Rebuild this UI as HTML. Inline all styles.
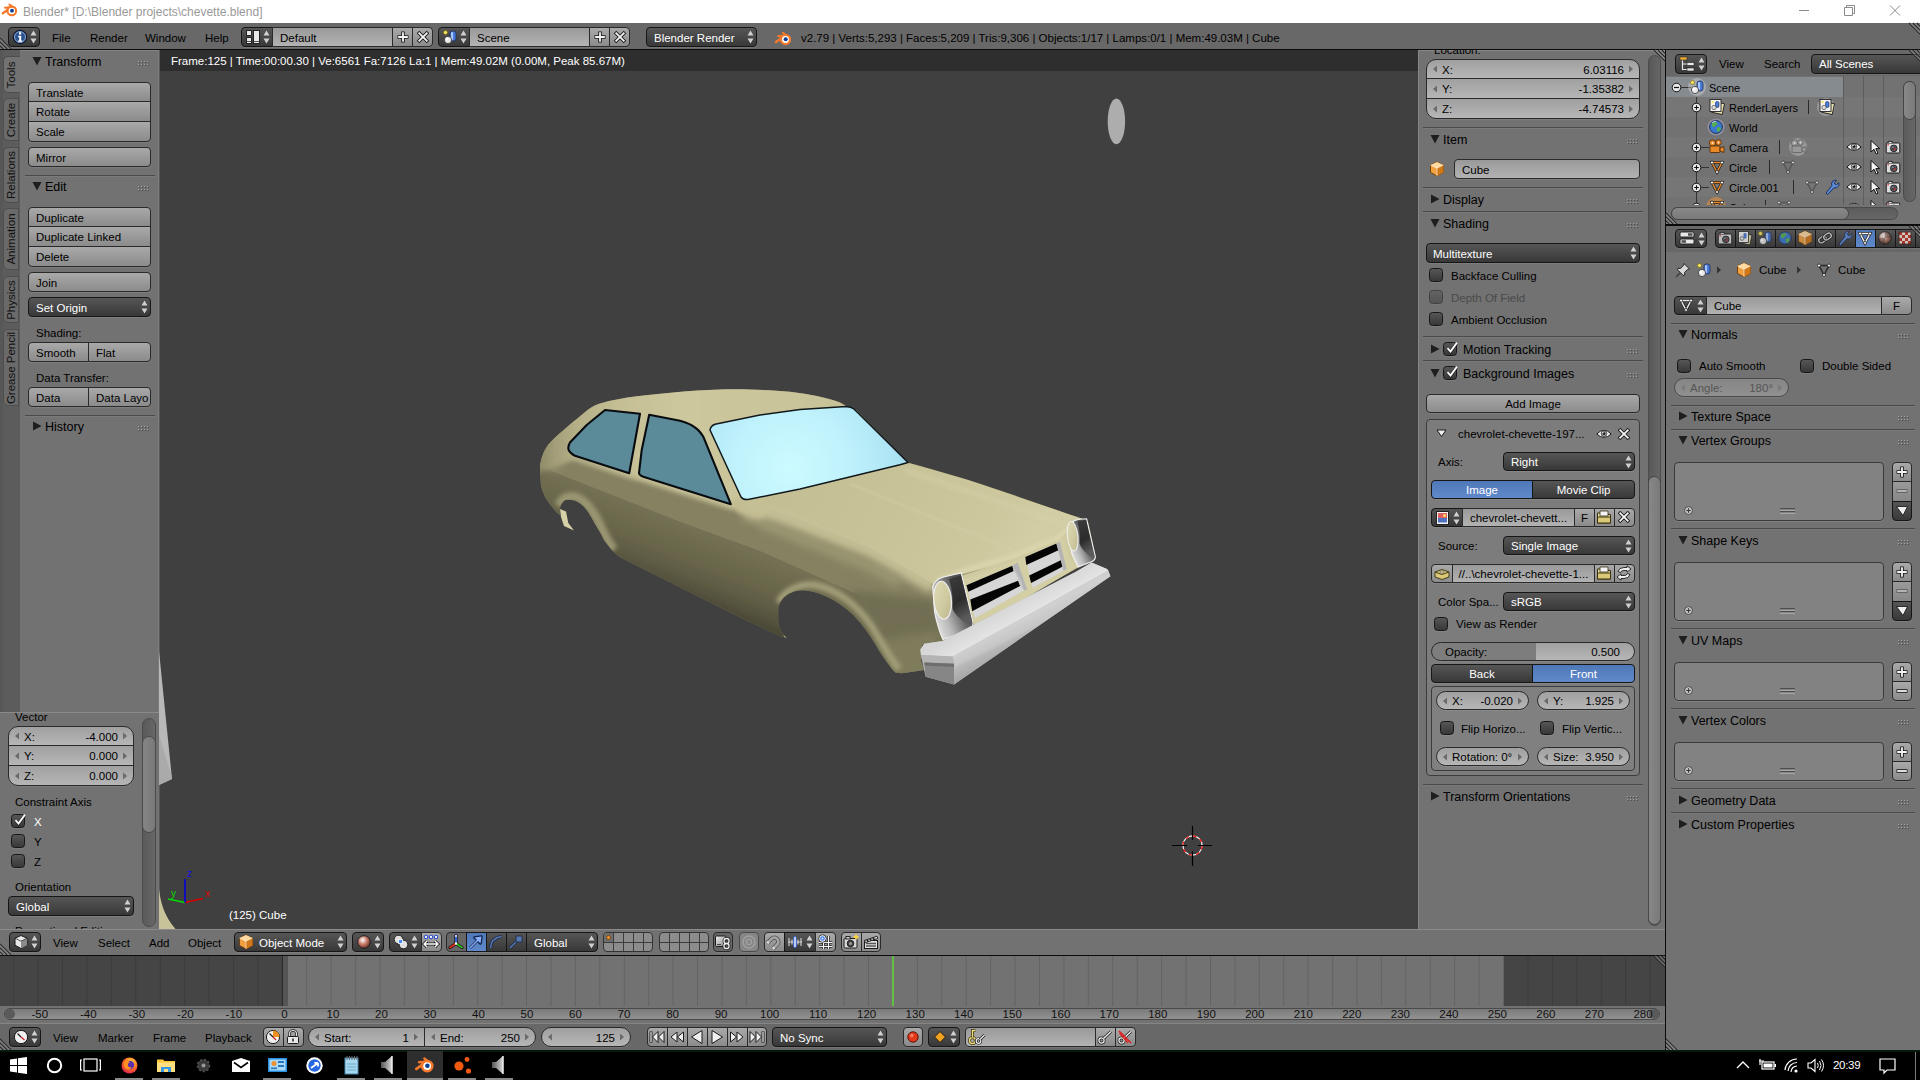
<!DOCTYPE html>
<html><head><meta charset="utf-8"><title>Blender</title><style>
html,body{margin:0;padding:0;background:#000;}
body{width:1920px;height:1080px;position:relative;overflow:hidden;font-family:"Liberation Sans",sans-serif;font-size:11.5px;color:#000;}
.a{position:absolute;box-sizing:border-box;white-space:nowrap;}
.t{font-size:11.5px;color:#000;}
.w{color:#fff;}
.ph{font-size:12.5px;color:#000;}
.tool{background:linear-gradient(#a9a9a9,#8b8b8b);border:1px solid #2a2a2a;border-radius:4px;box-shadow:0 1px 0 rgba(255,255,255,.08);}
.menu{background:linear-gradient(#565656,#383838);border:1px solid #161616;border-radius:4px;color:#fff;box-shadow:0 1px 0 rgba(255,255,255,.08);}
.num{background:linear-gradient(#a0a0a0,#b6b6b6);border:1px solid #2a2a2a;border-radius:10px;box-shadow:0 1px 0 rgba(255,255,255,.08);}
.tf{background:linear-gradient(#999,#b3b3b3);border:1px solid #2a2a2a;border-radius:4px;box-shadow:0 1px 0 rgba(255,255,255,.08);}
.sel{background:linear-gradient(#4f78b8,#6089cb);border:1px solid #161616;color:#fff;}
.chk{background:linear-gradient(#565656,#383838);border:1px solid #161616;border-radius:3.5px;box-shadow:0 1px 0 rgba(255,255,255,.08);}
.lbl{padding-left:7px;line-height:19px;font-size:11.5px;}
.ctr{text-align:center;line-height:19px;font-size:11.5px;}
.sep{background:#4a4a4a;height:1px;box-shadow:0 1px 0 rgba(255,255,255,.06);}
.r0{border-radius:0}
.tl{border-top-left-radius:4px}.tr{border-top-right-radius:4px}.bl{border-bottom-left-radius:4px}.br{border-bottom-right-radius:4px}
svg{position:absolute;overflow:visible}
</style></head><body>
<div class="a " style="left:0px;top:0px;width:1920px;height:23px;background:#fff"></div>
<svg style="left:0px;top:0px" width="20" height="20" viewBox="0 0 20 20"><g stroke="#f5792a" stroke-linecap="round" fill="none"><path d="M2.8 13.3L8.6 9.2" stroke-width="2.3"/><path d="M5 7.7L10.5 7.3" stroke-width="2"/><path d="M9.4 4.5L12.4 6.9" stroke-width="2"/></g><circle cx="11.8" cy="10.9" r="4.3" fill="#fff" stroke="#f5792a" stroke-width="2.1"/><circle cx="12" cy="10.7" r="1.9" fill="#0c3f90"/></svg>
<div class="a" style="left:23px;top:0;height:23px;line-height:24px;font-size:12px;color:#999">Blender* [D:\Blender projects\chevette.blend]</div>
<svg style="left:1790px;top:0" width="130" height="23"><path d="M9 10.5 H19 M54.5 7.5 H62.5 V15.5 H54.5Z M56.5 7.5 V5.5 H64.5 V13.5 H62.5 M100 5.5 L110 15.5 M110 5.5 L100 15.5" stroke="#8a8a8a" stroke-width="1" fill="none"/></svg>
<div class="a " style="left:0px;top:23px;width:1920px;height:27px;background:#686868;border-bottom:1px solid #0a0a0a"></div>
<svg style="left:0px;top:37px" width="12" height="12" viewBox="0 0 12 12"><path d="M0 1 L11 12 M0 5 L7 12 M0 9 L3 12" stroke="#2e2e2e" stroke-width="1.2" fill="none"/><path d="M0 2.4 L9.6 12 M0 6.4 L5.6 12 M0 10.4 L1.6 12" stroke="#9a9a9a" stroke-width="0.9" fill="none"/></svg>
<div class="a menu lbl " style="left:8px;top:27px;width:32px;height:20px;line-height:20px;"></div>
<svg style="left:30px;top:27px" width="8" height="20" viewBox="0 0 8 20"><path d="M0.5 8.5 L3.5 3.5 L6.5 8.5Z M0.5 11.5 L3.5 16.5 L6.5 11.5Z" fill="#d0d0d0"/></svg>
<svg style="left:12px;top:29px" width="16" height="16" viewBox="0 0 16 16"><circle cx="8" cy="8" r="6.6" fill="#2b528e" stroke="#0c162c" stroke-width="1.2"/><circle cx="8" cy="8" r="5.5" fill="none" stroke="#b0c8ee" stroke-width="1" stroke-opacity=".75"/><path d="M7 3.2h2.2v2.2H7z M6.2 6.8h3v4.6h1.2v1.4H6v-1.4h1.2V8.2H6.2z" fill="#fff"/></svg>
<div class="a t" style="left:52px;top:28px;height:20px;line-height:20px;">File</div>
<div class="a t" style="left:90px;top:28px;height:20px;line-height:20px;">Render</div>
<div class="a t" style="left:145px;top:28px;height:20px;line-height:20px;">Window</div>
<div class="a t" style="left:205px;top:28px;height:20px;line-height:20px;">Help</div>
<div class="a menu lbl r0 tl bl" style="left:241px;top:27px;width:32px;height:20px;line-height:20px;"></div>
<svg style="left:246px;top:30px" width="14" height="14" viewBox="0 0 14 14"><rect x="0.5" y="0.5" width="5" height="5" fill="#e8e8e8" stroke="#222"/><rect x="0.5" y="7.5" width="5" height="6" fill="#e8e8e8" stroke="#222"/><rect x="7.5" y="0.5" width="6" height="13" fill="#e8e8e8" stroke="#222"/><path d="M1 11.5h4 M8 11.5h5" stroke="#555"/></svg>
<svg style="left:263px;top:27px" width="8" height="20" viewBox="0 0 8 20"><path d="M0.5 8.5 L3.5 3.5 L6.5 8.5Z M0.5 11.5 L3.5 16.5 L6.5 11.5Z" fill="#d0d0d0"/></svg>
<div class="a tf lbl r0" style="left:272px;top:27px;width:121px;height:20px;line-height:20px;padding-left:7px">Default</div>
<div class="a tool lbl r0" style="left:392px;top:27px;width:21px;height:20px;line-height:20px;"></div>
<svg style="left:395px;top:29px" width="16" height="16" viewBox="0 0 16 16"><path d="M8 2.5V13.5M2.5 8H13.5" stroke="#1a1a1a" stroke-width="3.6"/><path d="M8 3.2V12.8M3.2 8H12.8" stroke="#f4f4f4" stroke-width="1.8"/></svg>
<div class="a tool lbl r0 tr br" style="left:412px;top:27px;width:21px;height:20px;line-height:20px;"></div>
<svg style="left:415px;top:29px" width="16" height="16" viewBox="0 0 16 16"><path d="M3 3L13 13M13 3L3 13" stroke="#1a1a1a" stroke-width="3.6"/><path d="M3.6 3.6L12.4 12.4M12.4 3.6L3.6 12.4" stroke="#f4f4f4" stroke-width="1.8"/></svg>
<div class="a menu lbl r0 tl bl" style="left:438px;top:27px;width:32px;height:20px;line-height:20px;"></div>
<svg style="left:442px;top:29px" width="16" height="16" viewBox="0 0 16 16"><rect x="8" y="2" width="6" height="10" rx="2.5" fill="#4a7ad8" stroke="#1b2c50" stroke-width=".8"/><rect x="9" y="3" width="2" height="8" rx="1" fill="#a8c8ff"/><circle cx="6" cy="11" r="3.6" fill="#e8e8e8" stroke="#333" stroke-width=".8"/><circle cx="5" cy="10" r="1.4" fill="#fff"/><circle cx="3.5" cy="3.5" r="2" fill="#f5e663" stroke="#7a6a10" stroke-width=".7"/></svg>
<svg style="left:460px;top:27px" width="8" height="20" viewBox="0 0 8 20"><path d="M0.5 8.5 L3.5 3.5 L6.5 8.5Z M0.5 11.5 L3.5 16.5 L6.5 11.5Z" fill="#d0d0d0"/></svg>
<div class="a tf lbl r0" style="left:469px;top:27px;width:121px;height:20px;line-height:20px;padding-left:7px">Scene</div>
<div class="a tool lbl r0" style="left:589px;top:27px;width:21px;height:20px;line-height:20px;"></div>
<svg style="left:592px;top:29px" width="16" height="16" viewBox="0 0 16 16"><path d="M8 2.5V13.5M2.5 8H13.5" stroke="#1a1a1a" stroke-width="3.6"/><path d="M8 3.2V12.8M3.2 8H12.8" stroke="#f4f4f4" stroke-width="1.8"/></svg>
<div class="a tool lbl r0 tr br" style="left:609px;top:27px;width:21px;height:20px;line-height:20px;"></div>
<svg style="left:612px;top:29px" width="16" height="16" viewBox="0 0 16 16"><path d="M3 3L13 13M13 3L3 13" stroke="#1a1a1a" stroke-width="3.6"/><path d="M3.6 3.6L12.4 12.4M12.4 3.6L3.6 12.4" stroke="#f4f4f4" stroke-width="1.8"/></svg>
<div class="a menu lbl " style="left:646px;top:27px;width:111px;height:20px;line-height:20px;">Blender Render</div>
<svg style="left:747px;top:27px" width="8" height="20" viewBox="0 0 8 20"><path d="M0.5 8.5 L3.5 3.5 L6.5 8.5Z M0.5 11.5 L3.5 16.5 L6.5 11.5Z" fill="#d0d0d0"/></svg>
<svg style="left:773.3px;top:27.9px" width="21.2" height="21.2" viewBox="0 0 20 20"><g stroke="#f5792a" stroke-linecap="round" fill="none"><path d="M2.8 13.3L8.6 9.2" stroke-width="2.3"/><path d="M5 7.7L10.5 7.3" stroke-width="2"/><path d="M9.4 4.5L12.4 6.9" stroke-width="2"/></g><circle cx="11.8" cy="10.9" r="4.3" fill="#fff" stroke="#f5792a" stroke-width="2.1"/><circle cx="12" cy="10.7" r="1.9" fill="#0c3f90"/></svg>
<div class="a t" style="left:801px;top:28px;height:20px;line-height:20px;">v2.79 | Verts:5,293 | Faces:5,209 | Tris:9,306 | Objects:1/17 | Lamps:0/1 | Mem:49.03M | Cube</div>
<svg style="left:1908px;top:23px" width="12" height="12" viewBox="0 0 12 12"><path d="M1 0 L12 11 M5 0 L12 7 M9 0 L12 3" stroke="#2e2e2e" stroke-width="1.2" fill="none"/><path d="M2.4 0 L12 9.6 M6.4 0 L12 5.6 M10.4 0 L12 1.6" stroke="#9a9a9a" stroke-width="0.9" fill="none"/></svg>
<div class="a " style="left:0px;top:50px;width:160px;height:879px;background:#727272;border-top:1px solid #848484"></div>
<div class="a " style="left:0px;top:50px;width:20px;height:663px;background:#5c5c5c"></div>
<div class="a " style="left:0px;top:50px;width:3px;height:663px;background:#575757"></div>
<div class="a " style="left:3px;top:56px;width:17px;height:37px;background:#727272;border:1px solid #4e4e4e;border-right:none;border-radius:5px 0 0 5px;"></div>
<div class="a" style="left:3px;top:56px;width:16px;height:37px;"><div class="a" style="left:8px;top:18.5px;transform:translate(-50%,-50%) rotate(-90deg);font-size:11.5px;line-height:14px;color:#111">Tools</div></div>
<div class="a " style="left:3px;top:98px;width:16px;height:43px;background:#6a6a6a;border:1px solid #4e4e4e;border-radius:5px 0 0 5px;"></div>
<div class="a" style="left:3px;top:98px;width:16px;height:43px;"><div class="a" style="left:8px;top:21.5px;transform:translate(-50%,-50%) rotate(-90deg);font-size:11.5px;line-height:14px;color:#111">Create</div></div>
<div class="a " style="left:3px;top:147px;width:16px;height:56px;background:#6a6a6a;border:1px solid #4e4e4e;border-radius:5px 0 0 5px;"></div>
<div class="a" style="left:3px;top:147px;width:16px;height:56px;"><div class="a" style="left:8px;top:28.0px;transform:translate(-50%,-50%) rotate(-90deg);font-size:11.5px;line-height:14px;color:#111">Relations</div></div>
<div class="a " style="left:3px;top:208px;width:16px;height:62px;background:#6a6a6a;border:1px solid #4e4e4e;border-radius:5px 0 0 5px;"></div>
<div class="a" style="left:3px;top:208px;width:16px;height:62px;"><div class="a" style="left:8px;top:31.0px;transform:translate(-50%,-50%) rotate(-90deg);font-size:11.5px;line-height:14px;color:#111">Animation</div></div>
<div class="a " style="left:3px;top:276px;width:16px;height:47px;background:#6a6a6a;border:1px solid #4e4e4e;border-radius:5px 0 0 5px;"></div>
<div class="a" style="left:3px;top:276px;width:16px;height:47px;"><div class="a" style="left:8px;top:23.5px;transform:translate(-50%,-50%) rotate(-90deg);font-size:11.5px;line-height:14px;color:#111">Physics</div></div>
<div class="a " style="left:3px;top:329px;width:16px;height:77px;background:#6a6a6a;border:1px solid #4e4e4e;border-radius:5px 0 0 5px;"></div>
<div class="a" style="left:3px;top:329px;width:16px;height:77px;"><div class="a" style="left:8px;top:38.5px;transform:translate(-50%,-50%) rotate(-90deg);font-size:11.5px;line-height:14px;color:#111">Grease Pencil</div></div>
<svg style="left:32px;top:56px" width="10" height="10"><path d="M0.5 1 L9.5 1 L5 9.5Z" fill="#1e1e1e"/></svg>
<div class="a ph" style="left:45px;top:52px;height:20px;line-height:20px;">Transform</div>
<svg style="left:138px;top:61px" width="12" height="6"><rect x="0" y="0" width="1" height="1" fill="#c8c8c8" fill-opacity=".55"/><rect x="1" y="1" width="1" height="1" fill="#000" fill-opacity=".35"/><rect x="0" y="3" width="1" height="1" fill="#c8c8c8" fill-opacity=".55"/><rect x="1" y="4" width="1" height="1" fill="#000" fill-opacity=".35"/><rect x="3" y="0" width="1" height="1" fill="#c8c8c8" fill-opacity=".55"/><rect x="4" y="1" width="1" height="1" fill="#000" fill-opacity=".35"/><rect x="3" y="3" width="1" height="1" fill="#c8c8c8" fill-opacity=".55"/><rect x="4" y="4" width="1" height="1" fill="#000" fill-opacity=".35"/><rect x="6" y="0" width="1" height="1" fill="#c8c8c8" fill-opacity=".55"/><rect x="7" y="1" width="1" height="1" fill="#000" fill-opacity=".35"/><rect x="6" y="3" width="1" height="1" fill="#c8c8c8" fill-opacity=".55"/><rect x="7" y="4" width="1" height="1" fill="#000" fill-opacity=".35"/><rect x="9" y="0" width="1" height="1" fill="#c8c8c8" fill-opacity=".55"/><rect x="10" y="1" width="1" height="1" fill="#000" fill-opacity=".35"/><rect x="9" y="3" width="1" height="1" fill="#c8c8c8" fill-opacity=".55"/><rect x="10" y="4" width="1" height="1" fill="#000" fill-opacity=".35"/></svg>
<div class="a tool lbl r0 tl tr" style="left:28px;top:82px;width:123px;height:20px;line-height:20px;">Translate</div>
<div class="a tool lbl r0" style="left:28px;top:101px;width:123px;height:21px;line-height:20px;">Rotate</div>
<div class="a tool lbl r0 bl br" style="left:28px;top:121px;width:123px;height:21px;line-height:20px;">Scale</div>
<div class="a tool lbl " style="left:28px;top:147px;width:123px;height:20px;line-height:20px;">Mirror</div>
<div class="a sep" style="left:25px;top:175px;width:130px;height:1px;"></div>
<svg style="left:32px;top:181px" width="10" height="10"><path d="M0.5 1 L9.5 1 L5 9.5Z" fill="#1e1e1e"/></svg>
<div class="a ph" style="left:45px;top:177px;height:20px;line-height:20px;">Edit</div>
<svg style="left:138px;top:186px" width="12" height="6"><rect x="0" y="0" width="1" height="1" fill="#c8c8c8" fill-opacity=".55"/><rect x="1" y="1" width="1" height="1" fill="#000" fill-opacity=".35"/><rect x="0" y="3" width="1" height="1" fill="#c8c8c8" fill-opacity=".55"/><rect x="1" y="4" width="1" height="1" fill="#000" fill-opacity=".35"/><rect x="3" y="0" width="1" height="1" fill="#c8c8c8" fill-opacity=".55"/><rect x="4" y="1" width="1" height="1" fill="#000" fill-opacity=".35"/><rect x="3" y="3" width="1" height="1" fill="#c8c8c8" fill-opacity=".55"/><rect x="4" y="4" width="1" height="1" fill="#000" fill-opacity=".35"/><rect x="6" y="0" width="1" height="1" fill="#c8c8c8" fill-opacity=".55"/><rect x="7" y="1" width="1" height="1" fill="#000" fill-opacity=".35"/><rect x="6" y="3" width="1" height="1" fill="#c8c8c8" fill-opacity=".55"/><rect x="7" y="4" width="1" height="1" fill="#000" fill-opacity=".35"/><rect x="9" y="0" width="1" height="1" fill="#c8c8c8" fill-opacity=".55"/><rect x="10" y="1" width="1" height="1" fill="#000" fill-opacity=".35"/><rect x="9" y="3" width="1" height="1" fill="#c8c8c8" fill-opacity=".55"/><rect x="10" y="4" width="1" height="1" fill="#000" fill-opacity=".35"/></svg>
<div class="a tool lbl r0 tl tr" style="left:28px;top:207px;width:123px;height:20px;line-height:20px;">Duplicate</div>
<div class="a tool lbl r0" style="left:28px;top:226px;width:123px;height:21px;line-height:20px;">Duplicate Linked</div>
<div class="a tool lbl r0 bl br" style="left:28px;top:246px;width:123px;height:21px;line-height:20px;">Delete</div>
<div class="a tool lbl " style="left:28px;top:272px;width:123px;height:20px;line-height:20px;">Join</div>
<div class="a menu lbl " style="left:28px;top:297px;width:123px;height:20px;line-height:20px;">Set Origin</div>
<svg style="left:141px;top:297px" width="8" height="20" viewBox="0 0 8 20"><path d="M0.5 8.5 L3.5 3.5 L6.5 8.5Z M0.5 11.5 L3.5 16.5 L6.5 11.5Z" fill="#d0d0d0"/></svg>
<div class="a t" style="left:36px;top:323px;height:20px;line-height:20px;">Shading:</div>
<div class="a tool lbl r0 tl bl" style="left:28px;top:342px;width:61px;height:20px;line-height:20px;">Smooth</div>
<div class="a tool lbl r0 tr br" style="left:88px;top:342px;width:63px;height:20px;line-height:20px;">Flat</div>
<div class="a t" style="left:36px;top:368px;height:20px;line-height:20px;">Data Transfer:</div>
<div class="a tool lbl r0 tl bl" style="left:28px;top:387px;width:61px;height:20px;line-height:20px;">Data</div>
<div class="a tool lbl r0 tr br" style="left:88px;top:387px;width:63px;height:20px;line-height:20px;overflow:hidden">Data Layo</div>
<div class="a sep" style="left:25px;top:415px;width:130px;height:1px;"></div>
<svg style="left:32px;top:420.5px" width="10" height="10"><path d="M1 0.5 L1 9.5 L9.5 5Z" fill="#1e1e1e"/></svg>
<div class="a ph" style="left:45px;top:416.5px;height:20px;line-height:20px;">History</div>
<svg style="left:138px;top:425.5px" width="12" height="6"><rect x="0" y="0" width="1" height="1" fill="#c8c8c8" fill-opacity=".55"/><rect x="1" y="1" width="1" height="1" fill="#000" fill-opacity=".35"/><rect x="0" y="3" width="1" height="1" fill="#c8c8c8" fill-opacity=".55"/><rect x="1" y="4" width="1" height="1" fill="#000" fill-opacity=".35"/><rect x="3" y="0" width="1" height="1" fill="#c8c8c8" fill-opacity=".55"/><rect x="4" y="1" width="1" height="1" fill="#000" fill-opacity=".35"/><rect x="3" y="3" width="1" height="1" fill="#c8c8c8" fill-opacity=".55"/><rect x="4" y="4" width="1" height="1" fill="#000" fill-opacity=".35"/><rect x="6" y="0" width="1" height="1" fill="#c8c8c8" fill-opacity=".55"/><rect x="7" y="1" width="1" height="1" fill="#000" fill-opacity=".35"/><rect x="6" y="3" width="1" height="1" fill="#c8c8c8" fill-opacity=".55"/><rect x="7" y="4" width="1" height="1" fill="#000" fill-opacity=".35"/><rect x="9" y="0" width="1" height="1" fill="#c8c8c8" fill-opacity=".55"/><rect x="10" y="1" width="1" height="1" fill="#000" fill-opacity=".35"/><rect x="9" y="3" width="1" height="1" fill="#c8c8c8" fill-opacity=".55"/><rect x="10" y="4" width="1" height="1" fill="#000" fill-opacity=".35"/></svg>
<div class="a " style="left:0px;top:712px;width:160px;height:1px;background:#8a8a8a"></div>
<div class="a t" style="left:15px;top:706.5px;height:20px;line-height:20px;">Vector</div>
<div class="a num" style="left:8px;top:726px;width:126px;height:20px;border-radius:10px 10px 0 0;"><span class="a" style="left:15px;top:0;line-height:20px;color:#000">X:</span><span class="a" style="right:15px;top:0;line-height:20px;color:#000">-4.000</span><svg style="left:5px;top:5.0px" width="6" height="8"><path d="M5 0.5 L1 4 L5 7.5Z" fill="#6a6a6a"/></svg><svg style="right:5px;top:5.0px" width="6" height="8"><path d="M1 0.5 L5 4 L1 7.5Z" fill="#6a6a6a"/></svg></div>
<div class="a num" style="left:8px;top:745px;width:126px;height:21px;border-radius:0;"><span class="a" style="left:15px;top:0;line-height:20px;color:#000">Y:</span><span class="a" style="right:15px;top:0;line-height:20px;color:#000">0.000</span><svg style="left:5px;top:5.5px" width="6" height="8"><path d="M5 0.5 L1 4 L5 7.5Z" fill="#6a6a6a"/></svg><svg style="right:5px;top:5.5px" width="6" height="8"><path d="M1 0.5 L5 4 L1 7.5Z" fill="#6a6a6a"/></svg></div>
<div class="a num" style="left:8px;top:765px;width:126px;height:21px;border-radius:0 0 10px 10px;"><span class="a" style="left:15px;top:0;line-height:20px;color:#000">Z:</span><span class="a" style="right:15px;top:0;line-height:20px;color:#000">0.000</span><svg style="left:5px;top:5.5px" width="6" height="8"><path d="M5 0.5 L1 4 L5 7.5Z" fill="#6a6a6a"/></svg><svg style="right:5px;top:5.5px" width="6" height="8"><path d="M1 0.5 L5 4 L1 7.5Z" fill="#6a6a6a"/></svg></div>
<div class="a " style="left:142px;top:718px;width:14px;height:209px;background:linear-gradient(90deg,#5a5a5a,#676767);border:1px solid #4a4a4a;border-radius:7px"></div>
<div class="a " style="left:142px;top:736px;width:14px;height:97px;background:linear-gradient(90deg,#858585,#7a7a7a);border:1px solid #4a4a4a;border-radius:7px"></div>
<div class="a t" style="left:15px;top:792px;height:20px;line-height:20px;">Constraint Axis</div>
<div class="a chk" style="left:11px;top:814px;width:14px;height:14px;"><svg style="left:-1px;top:-4px" width="18" height="18" viewBox="0 0 18 18"><path d="M4.5 9.5 L7.5 13 L14 4" fill="none" stroke="#000" stroke-opacity=".4" stroke-width="3"/><path d="M4.5 9.2 L7.5 12.6 L14 3.6" fill="none" stroke="#fff" stroke-width="1.8"/></svg></div>
<div class="a t w" style="left:34px;top:811.5px;height:20px;line-height:20px;">X</div>
<div class="a chk" style="left:11px;top:834px;width:14px;height:14px;"></div>
<div class="a t" style="left:34px;top:831.5px;height:20px;line-height:20px;">Y</div>
<div class="a chk" style="left:11px;top:854px;width:14px;height:14px;"></div>
<div class="a t" style="left:34px;top:851.5px;height:20px;line-height:20px;">Z</div>
<div class="a t" style="left:15px;top:877px;height:20px;line-height:20px;">Orientation</div>
<div class="a menu lbl " style="left:8px;top:896px;width:126px;height:20px;line-height:20px;padding-left:7px">Global</div>
<svg style="left:124px;top:896px" width="8" height="20" viewBox="0 0 8 20"><path d="M0.5 8.5 L3.5 3.5 L6.5 8.5Z M0.5 11.5 L3.5 16.5 L6.5 11.5Z" fill="#d0d0d0"/></svg>
<div class="a" style="left:15px;top:921px;height:8px;overflow:hidden;line-height:20px;font-size:11.5px">Proportional Editing</div>
<div class="a " style="left:159px;top:50px;width:1259px;height:879px;background:#404040"></div>
<div class="a " style="left:158px;top:50px;width:1px;height:662px;background:#7d7d7d"></div>
<div class="a " style="left:159px;top:50px;width:1px;height:879px;background:#585858"></div>
<svg style="left:160px;top:50px" width="1258" height="879" viewBox="160 50 1258 879"><defs>
<filter id="b2" x="-20%" y="-20%" width="140%" height="140%"><feGaussianBlur stdDeviation="2"/></filter>
<filter id="b4" x="-30%" y="-30%" width="160%" height="160%"><feGaussianBlur stdDeviation="4"/></filter>
<filter id="b8" x="-40%" y="-40%" width="180%" height="180%"><feGaussianBlur stdDeviation="8"/></filter>
<filter id="b05" x="-10%" y="-10%" width="120%" height="120%"><feGaussianBlur stdDeviation="0.6"/></filter>
<filter id="b1" x="-20%" y="-20%" width="140%" height="140%"><feGaussianBlur stdDeviation="1"/></filter>
<linearGradient id="side" gradientUnits="userSpaceOnUse" x1="680" y1="521.7" x2="652.5" y2="591.5">
 <stop offset="0" stop-color="#747054"/><stop offset=".2" stop-color="#6e6b4f"/><stop offset=".45" stop-color="#67644a"/><stop offset=".65" stop-color="#5d5b43"/><stop offset=".85" stop-color="#4f4d39"/><stop offset="1" stop-color="#444230"/>
</linearGradient>
<linearGradient id="roof" gradientUnits="userSpaceOnUse" x1="540" y1="400" x2="850" y2="400">
 <stop offset="0" stop-color="#8f8b68"/><stop offset=".05" stop-color="#a39f79"/><stop offset=".12" stop-color="#b5b088"/><stop offset=".25" stop-color="#c4be94"/><stop offset=".45" stop-color="#cdc79d"/><stop offset="1" stop-color="#c8c298"/>
</linearGradient>
<linearGradient id="hood" gradientUnits="userSpaceOnUse" x1="800" y1="470" x2="1000" y2="590">
 <stop offset="0" stop-color="#c4be94"/><stop offset=".5" stop-color="#c9c399"/><stop offset=".85" stop-color="#cdc89e"/><stop offset="1" stop-color="#d2cda4"/>
</linearGradient>
<radialGradient id="ws" gradientUnits="userSpaceOnUse" cx="790" cy="468" r="125">
 <stop offset="0" stop-color="#ccfaff"/><stop offset=".45" stop-color="#c0f2fc"/><stop offset=".8" stop-color="#afe6f5"/><stop offset="1" stop-color="#a2dcef"/>
</radialGradient>
<linearGradient id="bumpf" gradientUnits="userSpaceOnUse" x1="1000" y1="631" x2="1012" y2="655">
 <stop offset="0" stop-color="#d0d0d0"/><stop offset=".4" stop-color="#c6c6c6"/><stop offset=".52" stop-color="#b8b8b8"/><stop offset="1" stop-color="#a6a6a6"/>
</linearGradient>
<linearGradient id="chr1" gradientUnits="userSpaceOnUse" x1="938" y1="636" x2="972" y2="622">
 <stop offset="0" stop-color="#e6e6e6"/><stop offset=".4" stop-color="#b8b8b8"/><stop offset=".8" stop-color="#6a6a6a"/><stop offset="1" stop-color="#505050"/>
</linearGradient>
<linearGradient id="chr2" gradientUnits="userSpaceOnUse" x1="1075" y1="565" x2="1095" y2="556">
 <stop offset="0" stop-color="#e6e6e6"/><stop offset=".4" stop-color="#b8b8b8"/><stop offset=".8" stop-color="#6a6a6a"/><stop offset="1" stop-color="#505050"/>
</linearGradient>
<linearGradient id="hdark" gradientUnits="objectBoundingBox" x1="0" y1="0" x2=".3" y2="1"><stop offset="0" stop-color="#3c3c3c"/><stop offset=".6" stop-color="#2c2c2c"/><stop offset="1" stop-color="#5a5a5a"/></linearGradient>
<linearGradient id="bez" gradientUnits="objectBoundingBox" x1="0" y1="0" x2="1" y2="1"><stop offset="0" stop-color="#e0dbb4"/><stop offset=".6" stop-color="#cec99f"/><stop offset="1" stop-color="#b9b48c"/></linearGradient>
<linearGradient id="bumpt" gradientUnits="userSpaceOnUse" x1="1000" y1="610" x2="1010" y2="628"><stop offset="0" stop-color="#d6d6d6"/><stop offset="1" stop-color="#e6e6e6"/></linearGradient>
<clipPath id="bodyclip"><path id="bodyp" d="M540,468 C540.5,460 543,452 548,445 C556,436 568,426 578,418 C586,411 592,406 600,403.5 C612,400 624,398 637,396.3 C660,393.5 690,390.5 720,389.5 C745,388.8 770,390 790,391.8 C810,394 828,398 840,402.5 L847,406.5 L856,410 L908.5,463 C925,467 945,473 967,479.5 C1000,490 1035,502 1067,513.5 L1083,519 L1088.5,523 L1096,558 L1078,568 L944,641 L922,645 L921,661 L924,670 L902,673.2 L895.4,672.5 C891,668 882,656 877,647 C869,633 859,620 850.6,612.4 C840,603 826,595 813.9,592 C806,590 800,590 795.6,591 C789,593 785,596 783.3,598.1 C779,603 778,607 778.2,610.4 L778.2,622.6 C779,628 781,632 783.3,634.8 L786.4,637.9 L779.3,635.8 L742.6,618.5 L701.9,598.2 L661,577.8 L620.4,557.4 C614,553 609,547 604,540 C601,533 598,529 595,524 C592,518 589,513 586.7,510 C583,505 579,502 575,500.5 C571,499.5 568,499.5 565,500 C562,502 560.5,505 560,508 L560,515 C556,512 554,510 553.3,508.3 C549,503 547,500 545,496.7 C542,490 541,487 540.8,483.3 Z"/></clipPath>
</defs><ellipse cx="1116.4" cy="121.4" rx="8.7" ry="22.8" fill="#adadad"/><path d="M159,651 L172,779 L159,785Z" fill="#b8b8b8"/><path d="M159,735 L171.6,776 L172,779 L159,785Z" fill="#aaaaaa"/><path d="M159,889 C160.5,902 164,916 175.5,929 L159,929Z" fill="#c9c39a"/><g clip-path="url(#bodyclip)"><rect x="530" y="380" width="600" height="320" fill="#858161"/><path d="M530,462 L540.4,466.8 L680,521.7 L760,551 L861,596 L880,640 L900,690 L600,690 L530,520Z" fill="url(#side)" filter="url(#b05)"/><path d="M850,590 L900,596 L934,600 L946,640 L930,680 L890,680 L870,630Z" fill="#716e52" filter="url(#b4)"/><path d="M880,640 L940,630 L930,680 L895,680Z" fill="#7f7c5c" filter="url(#b4)"/><path d="M548,462 L570,455 L629,474.5 L643,478 L731,506 L745,505" fill="none" stroke="#aaa680" stroke-width="9" filter="url(#b2)"/><path d="M538,452 L560,440 L572,455 L556,470 L540,467Z" fill="#98946f" filter="url(#b4)"/><path d="M745,508 L780,514 L870,547 L936,584" fill="none" stroke="#bdb88f" stroke-width="22" filter="url(#b4)"/><path d="M760,522 L870,566 L900,582" fill="none" stroke="#9a9672" stroke-width="12" filter="url(#b4)"/><path d="M779,603 C783,592 798,583 815,585 C835,589 856,603 872,627 C882,643 890,658 899,669" fill="none" stroke="#a29e78" stroke-width="7" filter="url(#b2)"/><path d="M559,506 C562,498 568,495 576,497 C584,500 590,507 597,519 C601,528 606,540 614,550" fill="none" stroke="#9a9672" stroke-width="9" filter="url(#b2)"/><path d="M535,470 L541,440 L600,395 L720,380 L850,395 L915,462 L908,466 L748,503 L731,507 L643,480 L629,476 L575,458 L541,471Z" fill="url(#roof)" filter="url(#b2)"/><path d="M728,500 L750,497 L772,510 L760,518 L738,513Z" fill="#c2bc92" filter="url(#b2)"/><path d="M743,499.5 L908,462.5 L967,479.5 L1067,513.5 L1090,520 L1075,530 L1060,541 L1012,561 L963,574 L935,585 L870,548 L800,520Z" fill="url(#hood)"/><path d="M745,503 L800,522 L870,550 L934,586" fill="none" stroke="#c8c298" stroke-width="6" filter="url(#b4)"/><path d="M850,484 L1018,552" fill="none" stroke="#d6d1a8" stroke-width="2.5" filter="url(#b1)" opacity=".4"/><path d="M905,470 L1075,528" fill="none" stroke="#d6d1a8" stroke-width="6" filter="url(#b2)" opacity=".45"/><path d="M936,582 L963,571 L1012,557 L1058,538 L1072,527" fill="none" stroke="#dcd8b0" stroke-width="4" filter="url(#b2)"/><path d="M961,576 L1013,559 L1060,540 L1068,530 L1078,567 L975,628Z" fill="#cfca9f"/></g><path d="M605,410 L640,413.7 L629.2,473.3 L575,455.8 C570,453 568,451 568.3,448 C568.5,445 569,444 570,442.5 L586.7,425Z" fill="#5b8a99" stroke="#080c10" stroke-width="2.1" stroke-linejoin="round"/><path d="M649.2,414.7 L680,420.8 C688,423 692,425 695,427.5 C699,430 701,433 703.3,436.7 L730.8,504.2 L643.3,476.7 C640,475.5 639,474.5 639,473 L641.7,450Z" fill="#5b8a99" stroke="#080c10" stroke-width="2.1" stroke-linejoin="round"/><path d="M710,430 C710.5,427 712,425.5 715,424.3 L760,415 L800,409.6 L846,406.6 C850,406.8 852,407.5 854,409 L908,462.5 L900,464.8 L800,489 L748,499.5 C744,499.8 742.5,499 741,497Z" fill="url(#ws)" stroke="#10181c" stroke-width="1.5" stroke-linejoin="round"/><path d="M560,509 L566,511.5 L568.3,523 L574,530.5 L564,526 L561,517Z" fill="#d6d1a6"/><path d="M783.5,635 L787,638.5 L784,636.5Z" fill="#e0dcb6"/><path d="M963,580 L1014,561 L1022,558 L1064,538 L1070,560 L1078,567 L976,628Z" fill="#d3cea4"/><path d="M966.4,585.3 L1012.4,565.8 L1024.1,590.5 L974.8,618.3Z" fill="#d6d6d6"/><path d="M966.4,585.3 L1012.4,565.8 L1013.7,571 L968.3,591.8Z" fill="#050505"/><path d="M970.3,599.5 L1018.2,580.7 L1020.2,585.9 L972.2,611.2Z" fill="#050505"/><path d="M1012.4,565.8 L1017.6,562.6 L1027.3,589.8 L1024.1,590.5Z" fill="#b4b4b4"/><path d="M1012.4,565.8 L1013.7,571 L1018.2,576.9 L1018.2,580.7 L1020.2,585.9 L1024.1,590.5 L1021,580Z" fill="#c4c4c4"/><path d="M1025.3,557.1 L1056.4,543.5 L1063.5,571 L1032.5,588Z" fill="#d6d6d6"/><path d="M1025.3,557.1 L1056.4,543.5 L1058.4,550.3 L1026.3,564.9Z" fill="#050505"/><path d="M1029.2,575.6 L1061.3,560 L1062.3,566.8 L1031.1,583Z" fill="#050505"/><path d="M1056.4,543.5 L1060,541.5 L1066.5,569 L1063.5,571Z" fill="#b4b4b4"/><path d="M932.7,587 C934,582 938,578.5 943.7,577 L961.2,573 L973,622 C973.4,626 972,628 969,630 L943,639.5 C940,634 936,620 934.6,612Z" fill="url(#chr1)" stroke="#f2f2f2" stroke-width="1.1"/><path d="M949,579 L961,575.5 L972,622 C970,625 967,624 964,622 C958,617 953,612 952.5,608 C953,598 952,588 949,579Z" fill="url(#hdark)"/><ellipse cx="942.6" cy="600.2" rx="8.8" ry="19" fill="url(#bez)" stroke="#ededed" stroke-width="1.2" transform="rotate(-5 942.6 600.2)"/><path d="M1067.3,528.5 C1069,523.5 1074,520 1080,519.2 L1086.6,518.8 L1095.3,556.5 C1095.5,559 1094,560.5 1092,561.5 L1078,567 L1072,554Z" fill="url(#chr2)" stroke="#f2f2f2" stroke-width="1.1"/><path d="M1077.5,521.5 L1086,520 L1094,556 C1092,557.5 1089,556 1087,554 C1083,550 1080,546 1079.5,543 C1080,535 1079.5,528 1077.5,521.5Z" fill="url(#hdark)"/><ellipse cx="1072.6" cy="536.2" rx="5.3" ry="14.8" fill="url(#bez)" stroke="#ededed" stroke-width="1.1" transform="rotate(-6 1072.6 536.2)"/><path d="M920.4,649.5 L924.3,643.7 L942.4,641 L1075.9,571.7 L1091.6,562.6 L1107,569 L1110.4,576.2 L954,684.5 L925.6,676.7 L921,656Z" fill="#b6b6b6"/><path d="M920.4,649.5 L924.3,643.7 L942.4,641 L1075.9,571.7 L1091.6,562.6 L1107,569 L1108.4,570.6 L952.8,656.6 L921,655Z" fill="url(#bumpt)"/><path d="M952.8,656.6 L1108.4,570.6 L1110.4,576.2 L954,684.5Z" fill="url(#bumpf)"/><path d="M921,655 L952.8,656.6 L954,663.7 L924.3,662.5Z" fill="#b4b4b4"/><path d="M924.3,662.5 L954,663.7 L954,684.5 L925.6,676.7Z" fill="#868686"/><path d="M924.3,662.5 L954,663.7 L954,667 L924.8,665.5Z" fill="#6e6e6e"/><circle cx="1192.5" cy="845.5" r="9.6" fill="none" stroke="#fff" stroke-width="1.1"/><circle cx="1192.5" cy="845.5" r="9.6" fill="none" stroke="#f00" stroke-width="1.1" stroke-dasharray="3.77 3.77"/><path d="M1172,845.5H1187M1198,845.5H1212M1192.5,826V840M1192.5,851V866" stroke="#000" stroke-width="1.2"/><path d="M185,902.5L203,898.5" stroke="#dc0000" stroke-width="1.6"/><path d="M185,902.5L168,899" stroke="#00dc00" stroke-width="1.6"/><path d="M185,902.5V879" stroke="#0000dc" stroke-width="1.6"/><text x="205" y="897" font-family="Liberation Sans" font-size="10" fill="#dc0000">x</text><text x="171" y="897" font-family="Liberation Sans" font-size="10" fill="#00dc00">y</text><text x="187" y="877" font-family="Liberation Sans" font-size="10" fill="#1010e8">z</text></svg>
<div class="a " style="left:160px;top:50px;width:1258px;height:21px;background:rgba(0,0,0,.27)"></div>
<div class="a t w" style="left:171px;top:51px;height:20px;line-height:20px;">Frame:125 | Time:00:00.30 | Ve:6561 Fa:7126 La:1 | Mem:49.02M (0.00M, Peak 85.67M)</div>
<div class="a t w" style="left:229px;top:905px;height:20px;line-height:20px;">(125) Cube</div>
<div class="a " style="left:1418px;top:50px;width:247px;height:879px;background:#727272;border-left:1px solid #868686;border-top:1px solid #888"></div>
<div class="a" style="left:1434px;top:50px;height:6px;overflow:hidden;"><div style="margin-top:-10px;line-height:20px;font-size:11.5px">Location:</div></div>
<div class="a num" style="left:1426px;top:59px;width:214px;height:20px;border-radius:10px 10px 0 0;"><span class="a" style="left:15px;top:0;line-height:20px;color:#000">X:</span><span class="a" style="right:15px;top:0;line-height:20px;color:#000">6.03116</span><svg style="left:5px;top:5.0px" width="6" height="8"><path d="M5 0.5 L1 4 L5 7.5Z" fill="#6a6a6a"/></svg><svg style="right:5px;top:5.0px" width="6" height="8"><path d="M1 0.5 L5 4 L1 7.5Z" fill="#6a6a6a"/></svg></div>
<div class="a num" style="left:1426px;top:78px;width:214px;height:21px;border-radius:0;"><span class="a" style="left:15px;top:0;line-height:20px;color:#000">Y:</span><span class="a" style="right:15px;top:0;line-height:20px;color:#000">-1.35382</span><svg style="left:5px;top:5.5px" width="6" height="8"><path d="M5 0.5 L1 4 L5 7.5Z" fill="#6a6a6a"/></svg><svg style="right:5px;top:5.5px" width="6" height="8"><path d="M1 0.5 L5 4 L1 7.5Z" fill="#6a6a6a"/></svg></div>
<div class="a num" style="left:1426px;top:98px;width:214px;height:21px;border-radius:0 0 10px 10px;"><span class="a" style="left:15px;top:0;line-height:20px;color:#000">Z:</span><span class="a" style="right:15px;top:0;line-height:20px;color:#000">-4.74573</span><svg style="left:5px;top:5.5px" width="6" height="8"><path d="M5 0.5 L1 4 L5 7.5Z" fill="#6a6a6a"/></svg><svg style="right:5px;top:5.5px" width="6" height="8"><path d="M1 0.5 L5 4 L1 7.5Z" fill="#6a6a6a"/></svg></div>
<div class="a " style="left:1648px;top:55px;width:13px;height:871px;background:linear-gradient(90deg,#585858,#666);border:1px solid #4c4c4c;border-radius:7px"></div>
<div class="a " style="left:1648px;top:476px;width:13px;height:449px;background:linear-gradient(90deg,#878787,#7a7a7a);border:1px solid #484848;border-radius:7px"></div>
<div class="a sep" style="left:1423px;top:127px;width:220px;height:1px;"></div>
<svg style="left:1430px;top:133.5px" width="10" height="10"><path d="M0.5 1 L9.5 1 L5 9.5Z" fill="#1e1e1e"/></svg>
<div class="a ph" style="left:1443px;top:129.5px;height:20px;line-height:20px;">Item</div>
<svg style="left:1627px;top:138.5px" width="12" height="6"><rect x="0" y="0" width="1" height="1" fill="#c8c8c8" fill-opacity=".55"/><rect x="1" y="1" width="1" height="1" fill="#000" fill-opacity=".35"/><rect x="0" y="3" width="1" height="1" fill="#c8c8c8" fill-opacity=".55"/><rect x="1" y="4" width="1" height="1" fill="#000" fill-opacity=".35"/><rect x="3" y="0" width="1" height="1" fill="#c8c8c8" fill-opacity=".55"/><rect x="4" y="1" width="1" height="1" fill="#000" fill-opacity=".35"/><rect x="3" y="3" width="1" height="1" fill="#c8c8c8" fill-opacity=".55"/><rect x="4" y="4" width="1" height="1" fill="#000" fill-opacity=".35"/><rect x="6" y="0" width="1" height="1" fill="#c8c8c8" fill-opacity=".55"/><rect x="7" y="1" width="1" height="1" fill="#000" fill-opacity=".35"/><rect x="6" y="3" width="1" height="1" fill="#c8c8c8" fill-opacity=".55"/><rect x="7" y="4" width="1" height="1" fill="#000" fill-opacity=".35"/><rect x="9" y="0" width="1" height="1" fill="#c8c8c8" fill-opacity=".55"/><rect x="10" y="1" width="1" height="1" fill="#000" fill-opacity=".35"/><rect x="9" y="3" width="1" height="1" fill="#c8c8c8" fill-opacity=".55"/><rect x="10" y="4" width="1" height="1" fill="#000" fill-opacity=".35"/></svg>
<svg style="left:1429px;top:161px" width="16" height="16" viewBox="0 0 16 16"><path d="M8 1L14.5 4V11.5L8 15L1.5 11.5V4Z" fill="#f0a040" stroke="#6a3a08" stroke-width=".9"/><path d="M8 1L14.5 4L8 7.2L1.5 4Z" fill="#ffd9a0"/><path d="M8 7.2V15L14.5 11.5V4Z" fill="#d07818"/><path d="M1.5 4L8 7.2L14.5 4M8 7.2V15" stroke="#fff" stroke-opacity=".7" stroke-width=".8" fill="none"/></svg>
<div class="a tf lbl " style="left:1454px;top:159px;width:186px;height:20px;line-height:20px;padding-left:7px">Cube</div>
<div class="a sep" style="left:1423px;top:187px;width:220px;height:1px;"></div>
<svg style="left:1430px;top:193.5px" width="10" height="10"><path d="M1 0.5 L1 9.5 L9.5 5Z" fill="#1e1e1e"/></svg>
<div class="a ph" style="left:1443px;top:189.5px;height:20px;line-height:20px;">Display</div>
<svg style="left:1627px;top:198.5px" width="12" height="6"><rect x="0" y="0" width="1" height="1" fill="#c8c8c8" fill-opacity=".55"/><rect x="1" y="1" width="1" height="1" fill="#000" fill-opacity=".35"/><rect x="0" y="3" width="1" height="1" fill="#c8c8c8" fill-opacity=".55"/><rect x="1" y="4" width="1" height="1" fill="#000" fill-opacity=".35"/><rect x="3" y="0" width="1" height="1" fill="#c8c8c8" fill-opacity=".55"/><rect x="4" y="1" width="1" height="1" fill="#000" fill-opacity=".35"/><rect x="3" y="3" width="1" height="1" fill="#c8c8c8" fill-opacity=".55"/><rect x="4" y="4" width="1" height="1" fill="#000" fill-opacity=".35"/><rect x="6" y="0" width="1" height="1" fill="#c8c8c8" fill-opacity=".55"/><rect x="7" y="1" width="1" height="1" fill="#000" fill-opacity=".35"/><rect x="6" y="3" width="1" height="1" fill="#c8c8c8" fill-opacity=".55"/><rect x="7" y="4" width="1" height="1" fill="#000" fill-opacity=".35"/><rect x="9" y="0" width="1" height="1" fill="#c8c8c8" fill-opacity=".55"/><rect x="10" y="1" width="1" height="1" fill="#000" fill-opacity=".35"/><rect x="9" y="3" width="1" height="1" fill="#c8c8c8" fill-opacity=".55"/><rect x="10" y="4" width="1" height="1" fill="#000" fill-opacity=".35"/></svg>
<div class="a sep" style="left:1423px;top:211px;width:220px;height:1px;"></div>
<svg style="left:1430px;top:217.5px" width="10" height="10"><path d="M0.5 1 L9.5 1 L5 9.5Z" fill="#1e1e1e"/></svg>
<div class="a ph" style="left:1443px;top:213.5px;height:20px;line-height:20px;">Shading</div>
<svg style="left:1627px;top:222.5px" width="12" height="6"><rect x="0" y="0" width="1" height="1" fill="#c8c8c8" fill-opacity=".55"/><rect x="1" y="1" width="1" height="1" fill="#000" fill-opacity=".35"/><rect x="0" y="3" width="1" height="1" fill="#c8c8c8" fill-opacity=".55"/><rect x="1" y="4" width="1" height="1" fill="#000" fill-opacity=".35"/><rect x="3" y="0" width="1" height="1" fill="#c8c8c8" fill-opacity=".55"/><rect x="4" y="1" width="1" height="1" fill="#000" fill-opacity=".35"/><rect x="3" y="3" width="1" height="1" fill="#c8c8c8" fill-opacity=".55"/><rect x="4" y="4" width="1" height="1" fill="#000" fill-opacity=".35"/><rect x="6" y="0" width="1" height="1" fill="#c8c8c8" fill-opacity=".55"/><rect x="7" y="1" width="1" height="1" fill="#000" fill-opacity=".35"/><rect x="6" y="3" width="1" height="1" fill="#c8c8c8" fill-opacity=".55"/><rect x="7" y="4" width="1" height="1" fill="#000" fill-opacity=".35"/><rect x="9" y="0" width="1" height="1" fill="#c8c8c8" fill-opacity=".55"/><rect x="10" y="1" width="1" height="1" fill="#000" fill-opacity=".35"/><rect x="9" y="3" width="1" height="1" fill="#c8c8c8" fill-opacity=".55"/><rect x="10" y="4" width="1" height="1" fill="#000" fill-opacity=".35"/></svg>
<div class="a menu lbl " style="left:1426px;top:243px;width:214px;height:20px;line-height:20px;padding-left:6px">Multitexture</div>
<svg style="left:1630px;top:243px" width="8" height="20" viewBox="0 0 8 20"><path d="M0.5 8.5 L3.5 3.5 L6.5 8.5Z M0.5 11.5 L3.5 16.5 L6.5 11.5Z" fill="#d0d0d0"/></svg>
<div class="a chk" style="left:1429px;top:268px;width:14px;height:14px;"></div>
<div class="a t" style="left:1451px;top:266.0px;height:20px;line-height:20px;">Backface Culling</div>
<div class="a chk" style="left:1429px;top:290px;width:14px;height:14px;opacity:.5;"></div>
<div class="a t" style="left:1451px;top:288.0px;height:20px;line-height:20px;color:#4a4a4a">Depth Of Field</div>
<div class="a chk" style="left:1429px;top:312px;width:14px;height:14px;"></div>
<div class="a t" style="left:1451px;top:310.0px;height:20px;line-height:20px;">Ambient Occlusion</div>
<div class="a sep" style="left:1423px;top:336px;width:220px;height:1px;"></div>
<svg style="left:1430px;top:343.5px" width="10" height="10"><path d="M1 0.5 L1 9.5 L9.5 5Z" fill="#1e1e1e"/></svg>
<div class="a chk" style="left:1443px;top:341.5px;width:14px;height:14px;"><svg style="left:-1px;top:-4px" width="18" height="18" viewBox="0 0 18 18"><path d="M4.5 9.5 L7.5 13 L14 4" fill="none" stroke="#000" stroke-opacity=".4" stroke-width="3"/><path d="M4.5 9.2 L7.5 12.6 L14 3.6" fill="none" stroke="#fff" stroke-width="1.8"/></svg></div>
<div class="a ph" style="left:1463px;top:339.5px;height:20px;line-height:20px;">Motion Tracking</div>
<svg style="left:1627px;top:348.5px" width="12" height="6"><rect x="0" y="0" width="1" height="1" fill="#c8c8c8" fill-opacity=".55"/><rect x="1" y="1" width="1" height="1" fill="#000" fill-opacity=".35"/><rect x="0" y="3" width="1" height="1" fill="#c8c8c8" fill-opacity=".55"/><rect x="1" y="4" width="1" height="1" fill="#000" fill-opacity=".35"/><rect x="3" y="0" width="1" height="1" fill="#c8c8c8" fill-opacity=".55"/><rect x="4" y="1" width="1" height="1" fill="#000" fill-opacity=".35"/><rect x="3" y="3" width="1" height="1" fill="#c8c8c8" fill-opacity=".55"/><rect x="4" y="4" width="1" height="1" fill="#000" fill-opacity=".35"/><rect x="6" y="0" width="1" height="1" fill="#c8c8c8" fill-opacity=".55"/><rect x="7" y="1" width="1" height="1" fill="#000" fill-opacity=".35"/><rect x="6" y="3" width="1" height="1" fill="#c8c8c8" fill-opacity=".55"/><rect x="7" y="4" width="1" height="1" fill="#000" fill-opacity=".35"/><rect x="9" y="0" width="1" height="1" fill="#c8c8c8" fill-opacity=".55"/><rect x="10" y="1" width="1" height="1" fill="#000" fill-opacity=".35"/><rect x="9" y="3" width="1" height="1" fill="#c8c8c8" fill-opacity=".55"/><rect x="10" y="4" width="1" height="1" fill="#000" fill-opacity=".35"/></svg>
<div class="a sep" style="left:1423px;top:360px;width:220px;height:1px;"></div>
<svg style="left:1430px;top:367.5px" width="10" height="10"><path d="M0.5 1 L9.5 1 L5 9.5Z" fill="#1e1e1e"/></svg>
<div class="a chk" style="left:1443px;top:365.5px;width:14px;height:14px;"><svg style="left:-1px;top:-4px" width="18" height="18" viewBox="0 0 18 18"><path d="M4.5 9.5 L7.5 13 L14 4" fill="none" stroke="#000" stroke-opacity=".4" stroke-width="3"/><path d="M4.5 9.2 L7.5 12.6 L14 3.6" fill="none" stroke="#fff" stroke-width="1.8"/></svg></div>
<div class="a ph" style="left:1463px;top:363.5px;height:20px;line-height:20px;">Background Images</div>
<svg style="left:1627px;top:372.5px" width="12" height="6"><rect x="0" y="0" width="1" height="1" fill="#c8c8c8" fill-opacity=".55"/><rect x="1" y="1" width="1" height="1" fill="#000" fill-opacity=".35"/><rect x="0" y="3" width="1" height="1" fill="#c8c8c8" fill-opacity=".55"/><rect x="1" y="4" width="1" height="1" fill="#000" fill-opacity=".35"/><rect x="3" y="0" width="1" height="1" fill="#c8c8c8" fill-opacity=".55"/><rect x="4" y="1" width="1" height="1" fill="#000" fill-opacity=".35"/><rect x="3" y="3" width="1" height="1" fill="#c8c8c8" fill-opacity=".55"/><rect x="4" y="4" width="1" height="1" fill="#000" fill-opacity=".35"/><rect x="6" y="0" width="1" height="1" fill="#c8c8c8" fill-opacity=".55"/><rect x="7" y="1" width="1" height="1" fill="#000" fill-opacity=".35"/><rect x="6" y="3" width="1" height="1" fill="#c8c8c8" fill-opacity=".55"/><rect x="7" y="4" width="1" height="1" fill="#000" fill-opacity=".35"/><rect x="9" y="0" width="1" height="1" fill="#c8c8c8" fill-opacity=".55"/><rect x="10" y="1" width="1" height="1" fill="#000" fill-opacity=".35"/><rect x="9" y="3" width="1" height="1" fill="#c8c8c8" fill-opacity=".55"/><rect x="10" y="4" width="1" height="1" fill="#000" fill-opacity=".35"/></svg>
<div class="a tool ctr " style="left:1426px;top:394px;width:214px;height:19px;line-height:19.5px;">Add Image</div>
<div class="a " style="left:1426px;top:419px;width:214px;height:357px;background:#7c7c7c;border:1px solid #3c3c3c;border-radius:4px"></div>
<svg style="left:1436px;top:429px" width="11" height="9"><path d="M1 1H10L5.5 7.5Z" fill="#f0f0f0" stroke="#1a1a1a" stroke-width="1"/></svg>
<div class="a t" style="left:1458px;top:424.0px;height:20px;line-height:20px;">chevrolet-chevette-197...</div>
<svg style="left:1596px;top:426px" width="16" height="16" viewBox="0 0 16 16"><path d="M.8 8Q8 .6 15.2 8Q8 14.8 .8 8Z" fill="#f6f6f6" stroke="#1e1e1e" stroke-width="1"/><circle cx="8" cy="7.6" r="2.9" fill="#9a9a9a" stroke="#3a3a3a" stroke-width=".7"/><circle cx="8" cy="7.6" r="1.3" fill="#1a1a1a"/><circle cx="7" cy="6.6" r=".7" fill="#fff"/></svg>
<svg style="left:1616px;top:426px" width="16" height="16" viewBox="0 0 16 16"><path d="M3 3L13 13M13 3L3 13" stroke="#1a1a1a" stroke-width="3.6"/><path d="M3.6 3.6L12.4 12.4M12.4 3.6L3.6 12.4" stroke="#f4f4f4" stroke-width="1.8"/></svg>
<div class="a t" style="left:1438px;top:452.0px;height:20px;line-height:20px;">Axis:</div>
<div class="a menu lbl " style="left:1503px;top:452px;width:132px;height:19px;line-height:19.5px;">Right</div>
<svg style="left:1625px;top:452px" width="8" height="20" viewBox="0 0 8 20"><path d="M0.5 8.5 L3.5 3.5 L6.5 8.5Z M0.5 11.5 L3.5 16.5 L6.5 11.5Z" fill="#d0d0d0"/></svg>
<div class="a menu sel ctr r0 tl bl" style="left:1431px;top:480px;width:102px;height:19px;line-height:19.5px;">Image</div>
<div class="a menu ctr r0 tr br" style="left:1532px;top:480px;width:103px;height:19px;line-height:19.5px;">Movie Clip</div>
<div class="a menu lbl r0 tl bl" style="left:1431px;top:508px;width:32px;height:19px;line-height:19.5px;"></div>
<svg style="left:1435px;top:510px" width="16" height="16" viewBox="0 0 16 16"><rect x="1.5" y="1.5" width="12" height="13" fill="#f4f4f4" stroke="#222" stroke-width="1"/><rect x="3" y="3" width="9" height="5" fill="#e06060"/><rect x="3" y="8" width="9" height="4.5" fill="#5070c0"/><circle cx="9.5" cy="5.5" r="1.5" fill="#ffe060"/></svg>
<svg style="left:1453px;top:508px" width="8" height="20" viewBox="0 0 8 20"><path d="M0.5 8.5 L3.5 3.5 L6.5 8.5Z M0.5 11.5 L3.5 16.5 L6.5 11.5Z" fill="#d0d0d0"/></svg>
<div class="a tf ctr r0" style="left:1462px;top:508px;width:113px;height:19px;line-height:19.5px;">chevrolet-chevett...</div>
<div class="a tool ctr r0" style="left:1574px;top:508px;width:21px;height:19px;line-height:19.5px;">F</div>
<div class="a tool lbl r0" style="left:1594px;top:508px;width:21px;height:19px;line-height:19.5px;"></div>
<svg style="left:1596px;top:509px" width="16" height="16" viewBox="0 0 16 16"><path d="M1.5 4V14H14.5V5.5H8L6.5 4Z" fill="#e8dca0" stroke="#3a3210" stroke-width="1"/><path d="M4 2H12V7H4Z" fill="#f4f4f4" stroke="#3a3210" stroke-width=".8"/><path d="M1.5 8H14.5V14H1.5Z" fill="#d8c878" stroke="#3a3210" stroke-width="1"/></svg>
<div class="a tool lbl r0 tr br" style="left:1614px;top:508px;width:21px;height:19px;line-height:19.5px;"></div>
<svg style="left:1616px;top:509px" width="16" height="16" viewBox="0 0 16 16"><path d="M3 3L13 13M13 3L3 13" stroke="#1a1a1a" stroke-width="3.6"/><path d="M3.6 3.6L12.4 12.4M12.4 3.6L3.6 12.4" stroke="#f4f4f4" stroke-width="1.8"/></svg>
<div class="a t" style="left:1438px;top:536.0px;height:20px;line-height:20px;">Source:</div>
<div class="a menu lbl " style="left:1503px;top:536px;width:132px;height:19px;line-height:19.5px;">Single Image</div>
<svg style="left:1625px;top:536px" width="8" height="20" viewBox="0 0 8 20"><path d="M0.5 8.5 L3.5 3.5 L6.5 8.5Z M0.5 11.5 L3.5 16.5 L6.5 11.5Z" fill="#d0d0d0"/></svg>
<div class="a tool lbl r0 tl bl" style="left:1431px;top:564px;width:22px;height:19px;line-height:19.5px;"></div>
<svg style="left:1434px;top:566px" width="16" height="16" viewBox="0 0 16 16"><path d="M1 6L8 3.5L15 6V11L8 13.5L1 11Z" fill="#d8c878" stroke="#3a3210" stroke-width=".9"/><path d="M1 6L8 8.5L15 6" fill="none" stroke="#3a3210" stroke-width=".9"/><ellipse cx="8" cy="6" rx="2.2" ry="1" fill="#fff" stroke="#3a3210" stroke-width=".6"/></svg>
<div class="a tf ctr r0" style="left:1452px;top:564px;width:143px;height:19px;line-height:19.5px;">//..\chevrolet-chevette-1...</div>
<div class="a tool lbl r0" style="left:1594px;top:564px;width:21px;height:19px;line-height:19.5px;"></div>
<svg style="left:1596px;top:565px" width="16" height="16" viewBox="0 0 16 16"><path d="M1.5 4V14H14.5V5.5H8L6.5 4Z" fill="#e8dca0" stroke="#3a3210" stroke-width="1"/><path d="M4 2H12V7H4Z" fill="#f4f4f4" stroke="#3a3210" stroke-width=".8"/><path d="M1.5 8H14.5V14H1.5Z" fill="#d8c878" stroke="#3a3210" stroke-width="1"/></svg>
<div class="a tool lbl r0 tr br" style="left:1614px;top:564px;width:21px;height:19px;line-height:19.5px;"></div>
<svg style="left:1616px;top:565px" width="16" height="16" viewBox="0 0 16 16"><path d="M2 6.5Q3 2.5 8 2.5H11V.8L15 4L11 7.2V5.5H8Q5 5.5 4.6 7.5Z M14 9.5Q13 13.5 8 13.5H5V15.2L1 12L5 8.8V10.5H8Q11 10.5 11.4 8.5Z" fill="#f0f0f0" stroke="#1a1a1a" stroke-width=".9"/></svg>
<div class="a t" style="left:1438px;top:592.0px;height:20px;line-height:20px;">Color Spa...</div>
<div class="a menu lbl " style="left:1503px;top:592px;width:132px;height:19px;line-height:19.5px;">sRGB</div>
<svg style="left:1625px;top:592px" width="8" height="20" viewBox="0 0 8 20"><path d="M0.5 8.5 L3.5 3.5 L6.5 8.5Z M0.5 11.5 L3.5 16.5 L6.5 11.5Z" fill="#d0d0d0"/></svg>
<div class="a chk" style="left:1434px;top:617px;width:14px;height:14px;"></div>
<div class="a t" style="left:1456px;top:614.0px;height:20px;line-height:20px;">View as Render</div>
<div class="a num" style="left:1431px;top:642px;width:204px;height:19px;background:linear-gradient(90deg,#7d7d7d 0,#7d7d7d 51.5%,transparent 51.5%),linear-gradient(#a0a0a0,#b6b6b6);"><span class="a" style="left:13px;top:0;line-height:19.5px">Opacity:</span><span class="a" style="right:14px;top:0;line-height:19.5px">0.500</span></div>
<div class="a menu ctr r0 tl bl" style="left:1431px;top:664px;width:102px;height:19px;line-height:19.5px;">Back</div>
<div class="a menu sel ctr r0 tr br" style="left:1532px;top:664px;width:103px;height:19px;line-height:19.5px;">Front</div>
<div class="a " style="left:1431px;top:686px;width:204px;height:85px;background:#808080;border:1px solid #3c3c3c;border-radius:4px"></div>
<div class="a num" style="left:1436px;top:691px;width:93px;height:19px;"><span class="a" style="left:15px;top:0;line-height:19.5px;color:#000">X:</span><span class="a" style="right:15px;top:0;line-height:19.5px;color:#000">-0.020</span><svg style="left:5px;top:4.5px" width="6" height="8"><path d="M5 0.5 L1 4 L5 7.5Z" fill="#6a6a6a"/></svg><svg style="right:5px;top:4.5px" width="6" height="8"><path d="M1 0.5 L5 4 L1 7.5Z" fill="#6a6a6a"/></svg></div>
<div class="a num" style="left:1537px;top:691px;width:93px;height:19px;"><span class="a" style="left:15px;top:0;line-height:19.5px;color:#000">Y:</span><span class="a" style="right:15px;top:0;line-height:19.5px;color:#000">1.925</span><svg style="left:5px;top:4.5px" width="6" height="8"><path d="M5 0.5 L1 4 L5 7.5Z" fill="#6a6a6a"/></svg><svg style="right:5px;top:4.5px" width="6" height="8"><path d="M1 0.5 L5 4 L1 7.5Z" fill="#6a6a6a"/></svg></div>
<div class="a chk" style="left:1440px;top:721px;width:14px;height:14px;"></div>
<div class="a t" style="left:1461px;top:719.0px;height:20px;line-height:20px;">Flip Horizo...</div>
<div class="a chk" style="left:1540px;top:721px;width:14px;height:14px;"></div>
<div class="a t" style="left:1562px;top:719.0px;height:20px;line-height:20px;">Flip Vertic...</div>
<div class="a num" style="left:1436px;top:747px;width:93px;height:19px;"><span class="a" style="left:15px;top:0;line-height:19.5px;color:#000">Rotation: 0°</span><span class="a" style="right:15px;top:0;line-height:19.5px;color:#000"></span><svg style="left:5px;top:4.5px" width="6" height="8"><path d="M5 0.5 L1 4 L5 7.5Z" fill="#6a6a6a"/></svg><svg style="right:5px;top:4.5px" width="6" height="8"><path d="M1 0.5 L5 4 L1 7.5Z" fill="#6a6a6a"/></svg></div>
<div class="a num" style="left:1537px;top:747px;width:93px;height:19px;"><span class="a" style="left:15px;top:0;line-height:19.5px;color:#000">Size:</span><span class="a" style="right:15px;top:0;line-height:19.5px;color:#000">3.950</span><svg style="left:5px;top:4.5px" width="6" height="8"><path d="M5 0.5 L1 4 L5 7.5Z" fill="#6a6a6a"/></svg><svg style="right:5px;top:4.5px" width="6" height="8"><path d="M1 0.5 L5 4 L1 7.5Z" fill="#6a6a6a"/></svg></div>
<div class="a sep" style="left:1423px;top:784px;width:220px;height:1px;"></div>
<svg style="left:1430px;top:790.5px" width="10" height="10"><path d="M1 0.5 L1 9.5 L9.5 5Z" fill="#1e1e1e"/></svg>
<div class="a ph" style="left:1443px;top:786.5px;height:20px;line-height:20px;">Transform Orientations</div>
<svg style="left:1627px;top:795.5px" width="12" height="6"><rect x="0" y="0" width="1" height="1" fill="#c8c8c8" fill-opacity=".55"/><rect x="1" y="1" width="1" height="1" fill="#000" fill-opacity=".35"/><rect x="0" y="3" width="1" height="1" fill="#c8c8c8" fill-opacity=".55"/><rect x="1" y="4" width="1" height="1" fill="#000" fill-opacity=".35"/><rect x="3" y="0" width="1" height="1" fill="#c8c8c8" fill-opacity=".55"/><rect x="4" y="1" width="1" height="1" fill="#000" fill-opacity=".35"/><rect x="3" y="3" width="1" height="1" fill="#c8c8c8" fill-opacity=".55"/><rect x="4" y="4" width="1" height="1" fill="#000" fill-opacity=".35"/><rect x="6" y="0" width="1" height="1" fill="#c8c8c8" fill-opacity=".55"/><rect x="7" y="1" width="1" height="1" fill="#000" fill-opacity=".35"/><rect x="6" y="3" width="1" height="1" fill="#c8c8c8" fill-opacity=".55"/><rect x="7" y="4" width="1" height="1" fill="#000" fill-opacity=".35"/><rect x="9" y="0" width="1" height="1" fill="#c8c8c8" fill-opacity=".55"/><rect x="10" y="1" width="1" height="1" fill="#000" fill-opacity=".35"/><rect x="9" y="3" width="1" height="1" fill="#c8c8c8" fill-opacity=".55"/><rect x="10" y="4" width="1" height="1" fill="#000" fill-opacity=".35"/></svg>
<svg style="left:1653px;top:50px" width="12" height="12" viewBox="0 0 12 12"><path d="M1 0 L12 11 M5 0 L12 7 M9 0 L12 3" stroke="#2e2e2e" stroke-width="1.2" fill="none"/><path d="M2.4 0 L12 9.6 M6.4 0 L12 5.6 M10.4 0 L12 1.6" stroke="#9a9a9a" stroke-width="0.9" fill="none"/></svg>
<div class="a " style="left:0px;top:929px;width:1665px;height:27px;background:#727272;border-top:1px solid #8a8a8a;border-bottom:1px solid #0a0a0a"></div>
<svg style="left:0px;top:943px" width="12" height="12" viewBox="0 0 12 12"><path d="M0 1 L11 12 M0 5 L7 12 M0 9 L3 12" stroke="#2e2e2e" stroke-width="1.2" fill="none"/><path d="M0 2.4 L9.6 12 M0 6.4 L5.6 12 M0 10.4 L1.6 12" stroke="#9a9a9a" stroke-width="0.9" fill="none"/></svg>
<div class="a menu lbl " style="left:9px;top:932px;width:32px;height:20px;line-height:20px;"></div>
<svg style="left:31px;top:932px" width="8" height="20" viewBox="0 0 8 20"><path d="M0.5 8.5 L3.5 3.5 L6.5 8.5Z M0.5 11.5 L3.5 16.5 L6.5 11.5Z" fill="#d0d0d0"/></svg>
<svg style="left:13px;top:934px" width="16" height="16" viewBox="0 0 16 16"><path d="M8 1.5L14 4.2V11.2L8 14.5L2 11.2V4.2Z" fill="#e8e8e8" stroke="#1a1a1a" stroke-width="1"/><path d="M8 7.2V14.5L14 11.2V4.2Z" fill="#8a8a8a"/><path d="M2 4.2L8 7.2L14 4.2" fill="none" stroke="#1a1a1a" stroke-width=".7"/></svg>
<div class="a t" style="left:53px;top:933px;height:20px;line-height:20px;">View</div>
<div class="a t" style="left:98px;top:933px;height:20px;line-height:20px;">Select</div>
<div class="a t" style="left:149px;top:933px;height:20px;line-height:20px;">Add</div>
<div class="a t" style="left:188px;top:933px;height:20px;line-height:20px;">Object</div>
<div class="a menu lbl " style="left:234px;top:932px;width:113px;height:20px;line-height:20px;padding-left:24px">Object Mode</div>
<svg style="left:337px;top:932px" width="8" height="20" viewBox="0 0 8 20"><path d="M0.5 8.5 L3.5 3.5 L6.5 8.5Z M0.5 11.5 L3.5 16.5 L6.5 11.5Z" fill="#d0d0d0"/></svg>
<svg style="left:238px;top:934px" width="16" height="16" viewBox="0 0 16 16"><path d="M8 1L14.5 4V11.5L8 15L1.5 11.5V4Z" fill="#f0a040" stroke="#6a3a08" stroke-width=".9"/><path d="M8 1L14.5 4L8 7.2L1.5 4Z" fill="#ffd9a0"/><path d="M8 7.2V15L14.5 11.5V4Z" fill="#d07818"/><path d="M1.5 4L8 7.2L14.5 4M8 7.2V15" stroke="#fff" stroke-opacity=".7" stroke-width=".8" fill="none"/></svg>
<div class="a menu lbl " style="left:352px;top:932px;width:32px;height:20px;line-height:20px;"></div>
<svg style="left:374px;top:932px" width="8" height="20" viewBox="0 0 8 20"><path d="M0.5 8.5 L3.5 3.5 L6.5 8.5Z M0.5 11.5 L3.5 16.5 L6.5 11.5Z" fill="#d0d0d0"/></svg>
<svg style="left:356px;top:934px" width="16" height="16" viewBox="0 0 16 16"><defs><radialGradient id="sg" cx=".4" cy=".35" r=".7"><stop offset="0" stop-color="#fff"/><stop offset=".5" stop-color="#c87868"/><stop offset="1" stop-color="#5a2a20"/></radialGradient></defs><circle cx="8" cy="8" r="6.3" fill="url(#sg)" stroke="#1a1a1a" stroke-width=".9"/></svg>
<div class="a menu lbl r0 tl bl" style="left:389px;top:932px;width:33px;height:20px;line-height:20px;"></div>
<svg style="left:393px;top:934px" width="16" height="16" viewBox="0 0 16 16"><circle cx="5.5" cy="5.5" r="4.3" fill="#e0e0e0" stroke="#1a1a1a" stroke-width=".9"/><circle cx="10.5" cy="10.5" r="4.3" fill="#e0e0e0" stroke="#1a1a1a" stroke-width=".9"/><rect x="5.5" y="5.5" width="4" height="4" fill="#4a8aff" stroke="#fff" stroke-width=".8"/></svg>
<svg style="left:411px;top:932px" width="8" height="20" viewBox="0 0 8 20"><path d="M0.5 8.5 L3.5 3.5 L6.5 8.5Z M0.5 11.5 L3.5 16.5 L6.5 11.5Z" fill="#d0d0d0"/></svg>
<div class="a tool lbl r0 tr br" style="left:421px;top:932px;width:21px;height:20px;line-height:20px;"></div>
<svg style="left:423px;top:934px" width="16" height="16" viewBox="0 0 16 16"><circle cx="3" cy="3" r="1.7" fill="#fff" stroke="#2a50d0" stroke-width="1.1"/><circle cx="8" cy="3" r="1.7" fill="#fff" stroke="#2a50d0" stroke-width="1.1"/><circle cx="13" cy="3" r="1.7" fill="#fff" stroke="#2a50d0" stroke-width="1.1"/><path d="M1 10H15M4 7L1 10L4 13M12 7L15 10L12 13" fill="none" stroke="#1a1a1a" stroke-width="3"/><path d="M1 10H15M4 7L1 10L4 13M12 7L15 10L12 13" fill="none" stroke="#fff" stroke-width="1.4"/></svg>
<div class="a tool lbl r0 tl bl" style="left:446px;top:932px;width:21px;height:20px;line-height:20px;background:#666"></div>
<svg style="left:448px;top:934px" width="16" height="16" viewBox="0 0 16 16"><path d="M8 9.5V1.5" stroke="#111" stroke-width="3.2" stroke-linecap="round"/><path d="M8 9.5L2 13.5" stroke="#111" stroke-width="3.2" stroke-linecap="round"/><path d="M8 9.5L14 13.5" stroke="#111" stroke-width="3.2" stroke-linecap="round"/><path d="M8 9.5V1.5" stroke="#3a70f0" stroke-width="1.8" stroke-linecap="round"/><path d="M8 9.5L2 13.5" stroke="#e03020" stroke-width="1.8" stroke-linecap="round"/><path d="M8 9.5L14 13.5" stroke="#30c020" stroke-width="1.8" stroke-linecap="round"/><circle cx="8" cy="9.5" r="1.2" fill="#fff"/><circle cx="8" cy="2" r=".9" fill="#fff"/></svg>
<div class="a menu sel lbl r0" style="left:466px;top:932px;width:21px;height:20px;line-height:20px;"></div>
<svg style="left:468px;top:934px" width="16" height="16" viewBox="0 0 16 16"><path d="M2 14L10 6M6.5 3.5L13.5 2.5L12.5 9.5Z" fill="#5a8ae0" stroke="#12244a" stroke-width="2.6" stroke-linejoin="round"/><path d="M2 14L10 6" stroke="#8ab0ff" stroke-width="1.5"/><path d="M6.5 3.5L13.5 2.5L12.5 9.5Z" fill="#8ab0ff"/></svg>
<div class="a menu lbl r0" style="left:486px;top:932px;width:21px;height:20px;line-height:20px;"></div>
<svg style="left:488px;top:934px" width="16" height="16" viewBox="0 0 16 16"><path d="M2.5 14Q3 4 13.5 2.5" fill="none" stroke="#1c2c4c" stroke-width="3"/><path d="M2.5 14Q3 4 13.5 2.5" fill="none" stroke="#5878b0" stroke-width="1.5"/></svg>
<div class="a menu lbl r0" style="left:506px;top:932px;width:21px;height:20px;line-height:20px;"></div>
<svg style="left:508px;top:934px" width="16" height="16" viewBox="0 0 16 16"><path d="M2 14L9 7" stroke="#1c2c4c" stroke-width="3"/><path d="M2 14L9 7" stroke="#5878b0" stroke-width="1.5"/><rect x="8" y="2" width="6" height="6" fill="#5878b0" stroke="#1c2c4c" stroke-width=".9"/></svg>
<div class="a menu lbl r0 tr br" style="left:526px;top:932px;width:72px;height:20px;line-height:20px;padding-left:7px">Global</div>
<svg style="left:588px;top:932px" width="8" height="20" viewBox="0 0 8 20"><path d="M0.5 8.5 L3.5 3.5 L6.5 8.5Z M0.5 11.5 L3.5 16.5 L6.5 11.5Z" fill="#d0d0d0"/></svg>
<div class="a " style="left:603px;top:932px;width:50px;height:20px;background:#8c8c8c;border:1px solid #333;border-radius:4px"></div>
<div class="a " style="left:612.5px;top:933px;width:1px;height:18px;background:#3c3c3c"></div>
<div class="a " style="left:622.5px;top:933px;width:1px;height:18px;background:#3c3c3c"></div>
<div class="a " style="left:632.5px;top:933px;width:1px;height:18px;background:#3c3c3c"></div>
<div class="a " style="left:642.5px;top:933px;width:1px;height:18px;background:#3c3c3c"></div>
<div class="a " style="left:604px;top:941.5px;width:48px;height:1px;background:#3c3c3c"></div>
<div class="a " style="left:604px;top:933px;width:9px;height:9px;background:#6e6e6e;border-radius:3px 0 0 0"></div>
<div class="a " style="left:606px;top:935px;width:5px;height:5px;background:#f0942c;border:1px solid #7a4a10;border-radius:3px"></div>
<div class="a " style="left:659px;top:932px;width:50px;height:20px;background:#8c8c8c;border:1px solid #333;border-radius:4px"></div>
<div class="a " style="left:668.5px;top:933px;width:1px;height:18px;background:#3c3c3c"></div>
<div class="a " style="left:678.5px;top:933px;width:1px;height:18px;background:#3c3c3c"></div>
<div class="a " style="left:688.5px;top:933px;width:1px;height:18px;background:#3c3c3c"></div>
<div class="a " style="left:698.5px;top:933px;width:1px;height:18px;background:#3c3c3c"></div>
<div class="a " style="left:660px;top:941.5px;width:48px;height:1px;background:#3c3c3c"></div>
<div class="a tool lbl " style="left:713px;top:932px;width:20px;height:20px;line-height:20px;background:#666"></div>
<svg style="left:715px;top:934px" width="16" height="16" viewBox="0 0 16 16"><defs><linearGradient id="llg" x1="0" y1="0" x2="1" y2="1"><stop offset="0" stop-color="#f0f0f0"/><stop offset="1" stop-color="#8a8a8a"/></linearGradient></defs><rect x=".5" y="2" width="10.5" height="10.5" rx="1" fill="url(#llg)" stroke="#1a1a1a"/><path d="M2 10.5H6" stroke="#444" stroke-width="1"/><rect x="9" y="4.5" width="5" height="5" rx="2.2" fill="none" stroke="#1a1a1a" stroke-width="2.8"/><rect x="9" y="9.5" width="5" height="5" rx="2.2" fill="none" stroke="#1a1a1a" stroke-width="2.8"/><rect x="9" y="4.5" width="5" height="5" rx="2.2" fill="none" stroke="#f0f0f0" stroke-width="1.3"/><rect x="9" y="9.5" width="5" height="5" rx="2.2" fill="none" stroke="#f0f0f0" stroke-width="1.3"/></svg>
<div class="a tool lbl " style="left:739px;top:932px;width:20px;height:20px;line-height:20px;background:#868686;border-color:#4a4a4a"></div>
<svg style="left:741px;top:934px" width="16" height="16" viewBox="0 0 16 16"><circle cx="8" cy="8" r="6" fill="none" stroke="#a0a0a0" stroke-width="1.6"/><circle cx="8" cy="8" r="2.6" fill="none" stroke="#a0a0a0" stroke-width="1.4"/></svg>
<div class="a tool lbl r0 tl bl" style="left:764px;top:932px;width:21px;height:20px;line-height:20px;"></div>
<svg style="left:766px;top:934px" width="16" height="16" viewBox="0 0 16 16"><g transform="rotate(225 8 8)"><path d="M4 2.5V8.5A4 4 0 0 0 12 8.5V2.5" fill="none" stroke="#555" stroke-width="4.2"/><path d="M4 2.5V8.5A4 4 0 0 0 12 8.5V2.5" fill="none" stroke="#a6a6a6" stroke-width="2.6"/><path d="M4 2.5V4.5M12 2.5V4.5" stroke="#dcdcdc" stroke-width="2.6"/></g></svg>
<div class="a menu lbl r0" style="left:784px;top:932px;width:32px;height:20px;line-height:20px;"></div>
<svg style="left:787px;top:934px" width="16" height="16" viewBox="0 0 16 16"><path d="M1 8H15M2 4V12M14 4V12M5 5.5V10.5M11 5.5V10.5" stroke="#d8d8d8" stroke-width="1.1"/><rect x="6.8" y="2.5" width="2.4" height="11" rx="1" fill="#fff" stroke="#2a5ae0" stroke-width="1"/></svg>
<svg style="left:806px;top:932px" width="8" height="20" viewBox="0 0 8 20"><path d="M0.5 8.5 L3.5 3.5 L6.5 8.5Z M0.5 11.5 L3.5 16.5 L6.5 11.5Z" fill="#d0d0d0"/></svg>
<div class="a tool lbl r0 tr br" style="left:815px;top:932px;width:21px;height:20px;line-height:20px;"></div>
<svg style="left:817px;top:934px" width="16" height="16" viewBox="0 0 16 16"><path d="M6.5 4V15M11.5 2V15M2 8.5H15M2 12.5H15" fill="none" stroke="#2a2a2a" stroke-width="2.6"/><path d="M6.5 4V15M11.5 2V15M2 8.5H15M2 12.5H15" fill="none" stroke="#f4f4f4" stroke-width="1.1"/><circle cx="5.5" cy="4.5" r="3.8" fill="#f0f0f0" stroke="#1a1a1a" stroke-width=".8"/><circle cx="5.5" cy="4.5" r="2.3" fill="#3a7af0"/><circle cx="5.5" cy="4.5" r=".9" fill="#fff"/></svg>
<div class="a tool lbl r0 tl bl" style="left:841px;top:932px;width:21px;height:20px;line-height:20px;"></div>
<svg style="left:843px;top:934px" width="16" height="16" viewBox="0 0 16 16"><rect x="1" y="4.5" width="13" height="9.5" rx="1.2" fill="#d8d8d8" stroke="#1a1a1a"/><rect x="3" y="2.5" width="4" height="2.5" fill="#d8d8d8" stroke="#1a1a1a" stroke-width=".9"/><circle cx="7.5" cy="9.5" r="3.3" fill="#444" stroke="#1a1a1a" stroke-width=".9"/><circle cx="7.5" cy="9.5" r="1.5" fill="#999"/><path d="M13 .5V5.5M10.5 3H15.5" stroke="#f8d040" stroke-width="1.8"/></svg>
<div class="a tool lbl r0 tr br" style="left:861px;top:932px;width:20px;height:20px;line-height:20px;"></div>
<svg style="left:863px;top:934px" width="16" height="16" viewBox="0 0 16 16"><rect x="1.5" y="6.5" width="13" height="8" fill="#e0e0e0" stroke="#1a1a1a"/><path d="M1.5 6.5L14 2.2L14.8 4.4L2.2 8.7Z" fill="#e0e0e0" stroke="#1a1a1a" stroke-width=".9"/><path d="M4 5.6L5.2 7.6M7 4.6L8.2 6.6M10 3.6L11.2 5.6" stroke="#1a1a1a" stroke-width="1.6"/><path d="M3 9.5H13M3 12H13" stroke="#555" stroke-width="1.4"/></svg>
<div class="a " style="left:0px;top:956px;width:1665px;height:67px;background:#727272"></div>
<div class="a " style="left:0px;top:956px;width:282px;height:50px;background:#454545"></div>
<div class="a " style="left:282px;top:956px;width:1px;height:50px;background:#303030"></div>
<div class="a " style="left:283px;top:956px;width:5px;height:50px;background:#555"></div>
<div class="a " style="left:1503.5px;top:956px;width:161.5px;height:50px;background:#454545"></div>
<svg style="left:0;top:956px" width="1665" height="50"><rect x="13.1" y="0" width="1" height="50" fill="#000" fill-opacity=".13"/><rect x="37.6" y="0" width="1" height="50" fill="#000" fill-opacity=".13"/><rect x="62.0" y="0" width="1" height="50" fill="#000" fill-opacity=".13"/><rect x="86.4" y="0" width="1" height="50" fill="#000" fill-opacity=".13"/><rect x="110.8" y="0" width="1" height="50" fill="#000" fill-opacity=".13"/><rect x="135.3" y="0" width="1" height="50" fill="#000" fill-opacity=".13"/><rect x="159.7" y="0" width="1" height="50" fill="#000" fill-opacity=".13"/><rect x="184.1" y="0" width="1" height="50" fill="#000" fill-opacity=".13"/><rect x="208.5" y="0" width="1" height="50" fill="#000" fill-opacity=".13"/><rect x="233.0" y="0" width="1" height="50" fill="#000" fill-opacity=".13"/><rect x="257.4" y="0" width="1" height="50" fill="#000" fill-opacity=".13"/><rect x="281.8" y="0" width="1" height="50" fill="#000" fill-opacity=".13"/><rect x="306.2" y="0" width="1" height="50" fill="#000" fill-opacity=".13"/><rect x="330.6" y="0" width="1" height="50" fill="#000" fill-opacity=".13"/><rect x="355.1" y="0" width="1" height="50" fill="#000" fill-opacity=".13"/><rect x="379.5" y="0" width="1" height="50" fill="#000" fill-opacity=".13"/><rect x="403.9" y="0" width="1" height="50" fill="#000" fill-opacity=".13"/><rect x="428.4" y="0" width="1" height="50" fill="#000" fill-opacity=".13"/><rect x="452.8" y="0" width="1" height="50" fill="#000" fill-opacity=".13"/><rect x="477.2" y="0" width="1" height="50" fill="#000" fill-opacity=".13"/><rect x="501.6" y="0" width="1" height="50" fill="#000" fill-opacity=".13"/><rect x="526.0" y="0" width="1" height="50" fill="#000" fill-opacity=".13"/><rect x="550.5" y="0" width="1" height="50" fill="#000" fill-opacity=".13"/><rect x="574.9" y="0" width="1" height="50" fill="#000" fill-opacity=".13"/><rect x="599.3" y="0" width="1" height="50" fill="#000" fill-opacity=".13"/><rect x="623.8" y="0" width="1" height="50" fill="#000" fill-opacity=".13"/><rect x="648.2" y="0" width="1" height="50" fill="#000" fill-opacity=".13"/><rect x="672.6" y="0" width="1" height="50" fill="#000" fill-opacity=".13"/><rect x="697.0" y="0" width="1" height="50" fill="#000" fill-opacity=".13"/><rect x="721.5" y="0" width="1" height="50" fill="#000" fill-opacity=".13"/><rect x="745.9" y="0" width="1" height="50" fill="#000" fill-opacity=".13"/><rect x="770.3" y="0" width="1" height="50" fill="#000" fill-opacity=".13"/><rect x="794.7" y="0" width="1" height="50" fill="#000" fill-opacity=".13"/><rect x="819.2" y="0" width="1" height="50" fill="#000" fill-opacity=".13"/><rect x="843.6" y="0" width="1" height="50" fill="#000" fill-opacity=".13"/><rect x="868.0" y="0" width="1" height="50" fill="#000" fill-opacity=".13"/><rect x="892.4" y="0" width="1" height="50" fill="#000" fill-opacity=".13"/><rect x="916.8" y="0" width="1" height="50" fill="#000" fill-opacity=".13"/><rect x="941.3" y="0" width="1" height="50" fill="#000" fill-opacity=".13"/><rect x="965.7" y="0" width="1" height="50" fill="#000" fill-opacity=".13"/><rect x="990.1" y="0" width="1" height="50" fill="#000" fill-opacity=".13"/><rect x="1014.5" y="0" width="1" height="50" fill="#000" fill-opacity=".13"/><rect x="1039.0" y="0" width="1" height="50" fill="#000" fill-opacity=".13"/><rect x="1063.4" y="0" width="1" height="50" fill="#000" fill-opacity=".13"/><rect x="1087.8" y="0" width="1" height="50" fill="#000" fill-opacity=".13"/><rect x="1112.2" y="0" width="1" height="50" fill="#000" fill-opacity=".13"/><rect x="1136.7" y="0" width="1" height="50" fill="#000" fill-opacity=".13"/><rect x="1161.1" y="0" width="1" height="50" fill="#000" fill-opacity=".13"/><rect x="1185.5" y="0" width="1" height="50" fill="#000" fill-opacity=".13"/><rect x="1210.0" y="0" width="1" height="50" fill="#000" fill-opacity=".13"/><rect x="1234.4" y="0" width="1" height="50" fill="#000" fill-opacity=".13"/><rect x="1258.8" y="0" width="1" height="50" fill="#000" fill-opacity=".13"/><rect x="1283.2" y="0" width="1" height="50" fill="#000" fill-opacity=".13"/><rect x="1307.6" y="0" width="1" height="50" fill="#000" fill-opacity=".13"/><rect x="1332.1" y="0" width="1" height="50" fill="#000" fill-opacity=".13"/><rect x="1356.5" y="0" width="1" height="50" fill="#000" fill-opacity=".13"/><rect x="1380.9" y="0" width="1" height="50" fill="#000" fill-opacity=".13"/><rect x="1405.3" y="0" width="1" height="50" fill="#000" fill-opacity=".13"/><rect x="1429.8" y="0" width="1" height="50" fill="#000" fill-opacity=".13"/><rect x="1454.2" y="0" width="1" height="50" fill="#000" fill-opacity=".13"/><rect x="1478.6" y="0" width="1" height="50" fill="#000" fill-opacity=".13"/><rect x="1503.0" y="0" width="1" height="50" fill="#000" fill-opacity=".13"/><rect x="1527.5" y="0" width="1" height="50" fill="#000" fill-opacity=".13"/><rect x="1551.9" y="0" width="1" height="50" fill="#000" fill-opacity=".13"/><rect x="1576.3" y="0" width="1" height="50" fill="#000" fill-opacity=".13"/><rect x="1600.8" y="0" width="1" height="50" fill="#000" fill-opacity=".13"/><rect x="1625.2" y="0" width="1" height="50" fill="#000" fill-opacity=".13"/><rect x="1649.6" y="0" width="1" height="50" fill="#000" fill-opacity=".13"/></svg>
<div class="a " style="left:892px;top:956px;width:2px;height:50px;background:#60c040"></div>
<div class="a " style="left:4px;top:1008px;width:1656px;height:12px;background:linear-gradient(#7a7a7a,#929292);border:1px solid #4a4a4a;border-radius:6px"></div>
<div class="a " style="left:5px;top:1009px;width:10px;height:10px;background:#5a5a5a;border-radius:5px"></div>
<div class="a " style="left:1649px;top:1009px;width:10px;height:10px;background:#5a5a5a;border-radius:5px"></div>
<div class="a" style="left:17.8px;top:1004px;width:44px;text-align:center;line-height:20px;font-size:11.5px;color:#111">-50</div>
<div class="a" style="left:66.3px;top:1004px;width:44px;text-align:center;line-height:20px;font-size:11.5px;color:#111">-40</div>
<div class="a" style="left:114.8px;top:1004px;width:44px;text-align:center;line-height:20px;font-size:11.5px;color:#111">-30</div>
<div class="a" style="left:163.4px;top:1004px;width:44px;text-align:center;line-height:20px;font-size:11.5px;color:#111">-20</div>
<div class="a" style="left:211.9px;top:1004px;width:44px;text-align:center;line-height:20px;font-size:11.5px;color:#111">-10</div>
<div class="a" style="left:262.4px;top:1004px;width:44px;text-align:center;line-height:20px;font-size:11.5px;color:#111">0</div>
<div class="a" style="left:310.9px;top:1004px;width:44px;text-align:center;line-height:20px;font-size:11.5px;color:#111">10</div>
<div class="a" style="left:359.4px;top:1004px;width:44px;text-align:center;line-height:20px;font-size:11.5px;color:#111">20</div>
<div class="a" style="left:408.0px;top:1004px;width:44px;text-align:center;line-height:20px;font-size:11.5px;color:#111">30</div>
<div class="a" style="left:456.5px;top:1004px;width:44px;text-align:center;line-height:20px;font-size:11.5px;color:#111">40</div>
<div class="a" style="left:505.0px;top:1004px;width:44px;text-align:center;line-height:20px;font-size:11.5px;color:#111">50</div>
<div class="a" style="left:553.5px;top:1004px;width:44px;text-align:center;line-height:20px;font-size:11.5px;color:#111">60</div>
<div class="a" style="left:602.0px;top:1004px;width:44px;text-align:center;line-height:20px;font-size:11.5px;color:#111">70</div>
<div class="a" style="left:650.6px;top:1004px;width:44px;text-align:center;line-height:20px;font-size:11.5px;color:#111">80</div>
<div class="a" style="left:699.1px;top:1004px;width:44px;text-align:center;line-height:20px;font-size:11.5px;color:#111">90</div>
<div class="a" style="left:747.6px;top:1004px;width:44px;text-align:center;line-height:20px;font-size:11.5px;color:#111">100</div>
<div class="a" style="left:796.1px;top:1004px;width:44px;text-align:center;line-height:20px;font-size:11.5px;color:#111">110</div>
<div class="a" style="left:844.6px;top:1004px;width:44px;text-align:center;line-height:20px;font-size:11.5px;color:#111">120</div>
<div class="a" style="left:893.2px;top:1004px;width:44px;text-align:center;line-height:20px;font-size:11.5px;color:#111">130</div>
<div class="a" style="left:941.7px;top:1004px;width:44px;text-align:center;line-height:20px;font-size:11.5px;color:#111">140</div>
<div class="a" style="left:990.2px;top:1004px;width:44px;text-align:center;line-height:20px;font-size:11.5px;color:#111">150</div>
<div class="a" style="left:1038.7px;top:1004px;width:44px;text-align:center;line-height:20px;font-size:11.5px;color:#111">160</div>
<div class="a" style="left:1087.2px;top:1004px;width:44px;text-align:center;line-height:20px;font-size:11.5px;color:#111">170</div>
<div class="a" style="left:1135.8px;top:1004px;width:44px;text-align:center;line-height:20px;font-size:11.5px;color:#111">180</div>
<div class="a" style="left:1184.3px;top:1004px;width:44px;text-align:center;line-height:20px;font-size:11.5px;color:#111">190</div>
<div class="a" style="left:1232.8px;top:1004px;width:44px;text-align:center;line-height:20px;font-size:11.5px;color:#111">200</div>
<div class="a" style="left:1281.3px;top:1004px;width:44px;text-align:center;line-height:20px;font-size:11.5px;color:#111">210</div>
<div class="a" style="left:1329.8px;top:1004px;width:44px;text-align:center;line-height:20px;font-size:11.5px;color:#111">220</div>
<div class="a" style="left:1378.4px;top:1004px;width:44px;text-align:center;line-height:20px;font-size:11.5px;color:#111">230</div>
<div class="a" style="left:1426.9px;top:1004px;width:44px;text-align:center;line-height:20px;font-size:11.5px;color:#111">240</div>
<div class="a" style="left:1475.4px;top:1004px;width:44px;text-align:center;line-height:20px;font-size:11.5px;color:#111">250</div>
<div class="a" style="left:1523.9px;top:1004px;width:44px;text-align:center;line-height:20px;font-size:11.5px;color:#111">260</div>
<div class="a" style="left:1572.4px;top:1004px;width:44px;text-align:center;line-height:20px;font-size:11.5px;color:#111">270</div>
<div class="a" style="left:1621.0px;top:1004px;width:44px;text-align:center;line-height:20px;font-size:11.5px;color:#111">280</div>
<svg style="left:1653px;top:956px" width="12" height="12" viewBox="0 0 12 12"><path d="M1 0 L12 11 M5 0 L12 7 M9 0 L12 3" stroke="#2e2e2e" stroke-width="1.2" fill="none"/><path d="M2.4 0 L12 9.6 M6.4 0 L12 5.6 M10.4 0 L12 1.6" stroke="#9a9a9a" stroke-width="0.9" fill="none"/></svg>
<div class="a " style="left:0px;top:1023px;width:1665px;height:27px;background:#686868;border-top:1px solid #858585"></div>
<svg style="left:0px;top:1038px" width="12" height="12" viewBox="0 0 12 12"><path d="M0 1 L11 12 M0 5 L7 12 M0 9 L3 12" stroke="#2e2e2e" stroke-width="1.2" fill="none"/><path d="M0 2.4 L9.6 12 M0 6.4 L5.6 12 M0 10.4 L1.6 12" stroke="#9a9a9a" stroke-width="0.9" fill="none"/></svg>
<div class="a menu lbl " style="left:9px;top:1027px;width:32px;height:20px;line-height:20px;"></div>
<svg style="left:31px;top:1027px" width="8" height="20" viewBox="0 0 8 20"><path d="M0.5 8.5 L3.5 3.5 L6.5 8.5Z M0.5 11.5 L3.5 16.5 L6.5 11.5Z" fill="#d0d0d0"/></svg>
<svg style="left:13px;top:1029px" width="16" height="16" viewBox="0 0 16 16"><circle cx="8" cy="8" r="6.6" fill="#f0f0f0" stroke="#1a1a1a"/><path d="M8 8L4.5 4.5" stroke="#222" stroke-width="1.3"/><path d="M8 8L11.5 11" stroke="#d02020" stroke-width="1.3"/></svg>
<div class="a t" style="left:53px;top:1028px;height:20px;line-height:20px;">View</div>
<div class="a t" style="left:98px;top:1028px;height:20px;line-height:20px;">Marker</div>
<div class="a t" style="left:153px;top:1028px;height:20px;line-height:20px;">Frame</div>
<div class="a t" style="left:205px;top:1028px;height:20px;line-height:20px;">Playback</div>
<div class="a tool lbl r0 tl bl" style="left:263px;top:1027px;width:21px;height:20px;line-height:20px;"></div>
<svg style="left:265px;top:1029px" width="16" height="16" viewBox="0 0 16 16"><circle cx="8" cy="8" r="6.6" fill="#f0f0f0" stroke="#1a1a1a"/><path d="M8 8V1.4A6.6 6.6 0 0 1 14.6 8Z" fill="#f09020"/><path d="M8 8L4.5 4.5" stroke="#222" stroke-width="1.2"/><path d="M8 8L11 11" stroke="#d02020" stroke-width="1.2"/></svg>
<div class="a tool lbl r0 tr br" style="left:283px;top:1027px;width:21px;height:20px;line-height:20px;"></div>
<svg style="left:285px;top:1029px" width="16" height="16" viewBox="0 0 16 16"><path d="M4.5 8V5Q4.5 1.5 8 1.5Q11.5 1.5 11.5 5V8" fill="none" stroke="#1a1a1a" stroke-width="2.6"/><path d="M4.5 8V5Q4.5 1.5 8 1.5Q11.5 1.5 11.5 5V8" fill="none" stroke="#e0e0e0" stroke-width="1.2"/><rect x="2.5" y="7.5" width="11" height="7" rx="1" fill="#e8e8e8" stroke="#1a1a1a"/><rect x="7" y="9.5" width="2" height="3" fill="#555"/></svg>
<div class="a num" style="left:308px;top:1027px;width:117px;height:20px;border-radius:10px 0 0 10px;"><span class="a" style="left:15px;top:0;line-height:20px;color:#000">Start:</span><span class="a" style="right:15px;top:0;line-height:20px;color:#000">1</span><svg style="left:5px;top:5.0px" width="6" height="8"><path d="M5 0.5 L1 4 L5 7.5Z" fill="#6a6a6a"/></svg><svg style="right:5px;top:5.0px" width="6" height="8"><path d="M1 0.5 L5 4 L1 7.5Z" fill="#6a6a6a"/></svg></div>
<div class="a num" style="left:424px;top:1027px;width:112px;height:20px;border-radius:0 10px 10px 0;"><span class="a" style="left:15px;top:0;line-height:20px;color:#000">End:</span><span class="a" style="right:15px;top:0;line-height:20px;color:#000">250</span><svg style="left:5px;top:5.0px" width="6" height="8"><path d="M5 0.5 L1 4 L5 7.5Z" fill="#6a6a6a"/></svg><svg style="right:5px;top:5.0px" width="6" height="8"><path d="M1 0.5 L5 4 L1 7.5Z" fill="#6a6a6a"/></svg></div>
<div class="a num" style="left:541px;top:1027px;width:90px;height:20px;"><span class="a" style="left:15px;top:0;line-height:20px;color:#000"></span><span class="a" style="right:15px;top:0;line-height:20px;color:#000">125</span><svg style="left:5px;top:5.0px" width="6" height="8"><path d="M5 0.5 L1 4 L5 7.5Z" fill="#6a6a6a"/></svg><svg style="right:5px;top:5.0px" width="6" height="8"><path d="M1 0.5 L5 4 L1 7.5Z" fill="#6a6a6a"/></svg></div>
<div class="a tool lbl r0 tl bl" style="left:647px;top:1027px;width:21px;height:20px;line-height:20px;"></div>
<svg style="left:649px;top:1029px" width="16" height="16" viewBox="0 0 16 16"><path d="M2 2.5V13.5" stroke="#1a1a1a" stroke-width="3"/><path d="M2 3V13" stroke="#f0f0f0" stroke-width="1.2"/><path d="M9 2.5L3.5 8L9 13.5Z M15 2.5L9.5 8L15 13.5Z" fill="#f0f0f0" stroke="#1a1a1a" stroke-width="1"/></svg>
<div class="a tool lbl r0" style="left:667px;top:1027px;width:21px;height:20px;line-height:20px;"></div>
<svg style="left:669px;top:1029px" width="16" height="16" viewBox="0 0 16 16"><path d="M8 3L2 8L8 13Z M14.5 3L8.5 8L14.5 13Z" fill="#f0f0f0" stroke="#1a1a1a" stroke-width="1"/></svg>
<div class="a tool lbl r0" style="left:687px;top:1027px;width:21px;height:20px;line-height:20px;"></div>
<svg style="left:689px;top:1029px" width="16" height="16" viewBox="0 0 16 16"><path d="M13 1.5L2.5 8L13 14.5Z" fill="#f0f0f0" stroke="#1a1a1a" stroke-width="1"/></svg>
<div class="a tool lbl r0" style="left:707px;top:1027px;width:21px;height:20px;line-height:20px;"></div>
<svg style="left:709px;top:1029px" width="16" height="16" viewBox="0 0 16 16"><path d="M3 1.5L13.5 8L3 14.5Z" fill="#f0f0f0" stroke="#1a1a1a" stroke-width="1"/></svg>
<div class="a tool lbl r0" style="left:727px;top:1027px;width:21px;height:20px;line-height:20px;"></div>
<svg style="left:729px;top:1029px" width="16" height="16" viewBox="0 0 16 16"><path d="M1.5 3L7.5 8L1.5 13Z M8 3L14 8L8 13Z" fill="#f0f0f0" stroke="#1a1a1a" stroke-width="1"/></svg>
<div class="a tool lbl r0 tr br" style="left:747px;top:1027px;width:20px;height:20px;line-height:20px;"></div>
<svg style="left:749px;top:1029px" width="16" height="16" viewBox="0 0 16 16"><path d="M1 2.5L6.5 8L1 13.5Z M7 2.5L12.5 8L7 13.5Z" fill="#f0f0f0" stroke="#1a1a1a" stroke-width="1"/><path d="M14 2.5V13.5" stroke="#1a1a1a" stroke-width="3"/><path d="M14 3V13" stroke="#f0f0f0" stroke-width="1.2"/></svg>
<div class="a menu lbl " style="left:772px;top:1027px;width:115px;height:20px;line-height:20px;padding-left:7px">No Sync</div>
<svg style="left:877px;top:1027px" width="8" height="20" viewBox="0 0 8 20"><path d="M0.5 8.5 L3.5 3.5 L6.5 8.5Z M0.5 11.5 L3.5 16.5 L6.5 11.5Z" fill="#d0d0d0"/></svg>
<div class="a tool lbl " style="left:903px;top:1027px;width:20px;height:20px;line-height:20px;"></div>
<svg style="left:905px;top:1029px" width="16" height="16" viewBox="0 0 16 16"><circle cx="8" cy="8" r="5.2" fill="#e03818" stroke="#5a1408" stroke-width="1"/><circle cx="6.8" cy="6.6" r="1.8" fill="#ff9a80" fill-opacity=".7"/></svg>
<div class="a menu lbl " style="left:928px;top:1027px;width:32px;height:20px;line-height:20px;"></div>
<svg style="left:950px;top:1027px" width="8" height="20" viewBox="0 0 8 20"><path d="M0.5 8.5 L3.5 3.5 L6.5 8.5Z M0.5 11.5 L3.5 16.5 L6.5 11.5Z" fill="#d0d0d0"/></svg>
<svg style="left:932px;top:1029px" width="16" height="16" viewBox="0 0 16 16"><path d="M8 2.5L13.5 8L8 13.5L2.5 8Z" fill="#f0a020" stroke="#1a1a1a" stroke-width="1"/></svg>
<div class="a tf lbl r0 tl bl" style="left:965px;top:1027px;width:131px;height:20px;line-height:20px;"></div>
<svg style="left:968px;top:1029px" width="18" height="16" viewBox="0 0 18 16"><circle cx="4.5" cy="11.5" r="3" fill="none" stroke="#3a3210" stroke-width="3"/><circle cx="4.5" cy="11.5" r="3" fill="none" stroke="#f0e080" stroke-width="1.4"/><path d="M4.5 8.5V1.5H7.5" fill="none" stroke="#3a3210" stroke-width="3"/><path d="M4.5 8.5V1.5H7.5" fill="none" stroke="#f0e080" stroke-width="1.4"/><circle cx="10.5" cy="12" r="2.3" fill="none" stroke="#1a1a1a" stroke-width="2.6"/><circle cx="10.5" cy="12" r="2.3" fill="none" stroke="#f0f0f0" stroke-width="1.2"/><path d="M12 10.5L16.5 6" stroke="#1a1a1a" stroke-width="2.8"/><path d="M12 10.5L16.5 6" stroke="#f0f0f0" stroke-width="1.3"/></svg>
<div class="a tool lbl r0" style="left:1095px;top:1027px;width:21px;height:20px;line-height:20px;"></div>
<svg style="left:1097px;top:1029px" width="16" height="16" viewBox="0 0 16 16"><circle cx="4.5" cy="11.5" r="2.6" fill="none" stroke="#1a1a1a" stroke-width="2.8"/><circle cx="4.5" cy="11.5" r="2.6" fill="none" stroke="#f0f0f0" stroke-width="1.3"/><path d="M6.5 9.5L14 2.5" stroke="#1a1a1a" stroke-width="3"/><path d="M6.5 9.5L14 2.5" stroke="#f0f0f0" stroke-width="1.4"/></svg>
<div class="a tool lbl r0 tr br" style="left:1115px;top:1027px;width:21px;height:20px;line-height:20px;"></div>
<svg style="left:1117px;top:1029px" width="16" height="16" viewBox="0 0 16 16"><circle cx="4.5" cy="11.5" r="2.6" fill="none" stroke="#1a1a1a" stroke-width="2.8"/><circle cx="4.5" cy="11.5" r="2.6" fill="none" stroke="#f0f0f0" stroke-width="1.3"/><path d="M6.5 9.5L14 2.5" stroke="#1a1a1a" stroke-width="3"/><path d="M6.5 9.5L14 2.5" stroke="#f0f0f0" stroke-width="1.4"/></svg>
<svg style="left:1117px;top:1029px" width="16" height="16" viewBox="0 0 16 16"><path d="M2 2L14 14" stroke="#e02020" stroke-width="1.6"/><path d="M11 14L2.5 4" stroke="#e02020" stroke-width="1.2"/></svg>
<div class="a " style="left:0px;top:1050px;width:1920px;height:30px;background:#000;border-top:2px solid #08180a"></div>
<svg style="left:10px;top:1057px" width="17" height="17" viewBox="0 0 17 17"><path d="M0 2.4L7 1.4V8H0Z M8 1.2L17 0V8H8Z M0 9H7V15.6L0 14.6Z M8 9H17V17L8 15.8Z" fill="#fff"/></svg>
<svg style="left:46px;top:1057px" width="17" height="17" viewBox="0 0 17 17"><circle cx="8.5" cy="8.5" r="6.7" fill="none" stroke="#fff" stroke-width="2"/></svg>
<svg style="left:80px;top:1058px" width="21" height="14" viewBox="0 0 21 14"><rect x="4" y="1" width="13" height="12" fill="none" stroke="#fff" stroke-width="1.2"/><path d="M2 2H0.6V12H2M19 2H20.4V12H19" fill="none" stroke="#fff" stroke-width="1.2"/></svg>
<svg style="left:121px;top:1057px" width="17" height="17" viewBox="0 0 17 17"><defs><radialGradient id="ff" cx=".6" cy=".3" r=".8"><stop offset="0" stop-color="#ffe040"/><stop offset=".5" stop-color="#ff7020"/><stop offset="1" stop-color="#d01060"/></radialGradient></defs><circle cx="8.5" cy="8.5" r="8" fill="url(#ff)"/><circle cx="9" cy="8" r="4.2" fill="#5a30b0"/><path d="M3 5Q6 3 9 5Q6.5 6 7 9Q8 11 11 10Q9 13.5 5 12Q2 9.5 3 5Z" fill="#ff9020"/></svg>
<svg style="left:157px;top:1058px" width="19" height="15" viewBox="0 0 19 15"><path d="M0 1.5H6L7.5 3H18V14H0Z" fill="#f8c838"/><path d="M0 4.5H18V14H0Z" fill="#ffe080"/><path d="M4 14V9H14V14H11V11H7V14Z" fill="#3898e8"/></svg>
<svg style="left:195px;top:1057px" width="17" height="17" viewBox="0 0 17 17"><circle cx="8.5" cy="8.5" r="6" fill="#3a3a3a" stroke="#555" stroke-width="1.5" stroke-dasharray="2 2"/><circle cx="8.5" cy="8.5" r="2" fill="#999"/></svg>
<svg style="left:232px;top:1058px" width="18" height="14" viewBox="0 0 18 14"><path d="M0 3L9 0L18 3V14H0Z" fill="#fff"/><path d="M2 4.5L9 9.5L16 4.5" fill="none" stroke="#000" stroke-width="1.6"/></svg>
<svg style="left:268px;top:1058px" width="19" height="14" viewBox="0 0 19 14"><rect x="0" y="0" width="19" height="14" fill="#2890e0"/><rect x="1.5" y="1.5" width="16" height="11" fill="#a8d8f8"/><circle cx="6" cy="5.5" r="2.5" fill="#f09030"/><rect x="10" y="3" width="6" height="2" fill="#2878c0"/><rect x="10" y="7" width="6" height="2" fill="#2878c0"/><rect x="3" y="9.5" width="6" height="1.6" fill="#2878c0"/></svg>
<svg style="left:306px;top:1057px" width="17" height="17" viewBox="0 0 17 17"><circle cx="8.5" cy="8.5" r="8.2" fill="#fff"/><circle cx="8.5" cy="8.5" r="6.2" fill="#2868e0"/><path d="M5 11L12 6M12 6H8.5M12 6V9.5" stroke="#fff" stroke-width="1.8" fill="none"/></svg>
<svg style="left:344px;top:1056px" width="15" height="19" viewBox="0 0 15 19"><rect x="1" y="2" width="13" height="16" fill="#a8d8f0" stroke="#4a88b0" stroke-width="1"/><path d="M3 0V4M5.5 0V4M8 0V4M10.5 0V4M13 0V4" stroke="#6a6a6a" stroke-width="1"/><path d="M3 8H12M3 11H12M3 14H12" stroke="#6aa8c8" stroke-width="1"/></svg>
<svg style="left:381px;top:1056px" width="14" height="18" viewBox="0 0 14 18"><defs><linearGradient id="sp381" x1="0" x2="1"><stop offset="0" stop-color="#555"/><stop offset="1" stop-color="#d8d8d8"/></linearGradient></defs><path d="M0 6H4L11 0V18L4 12H0Z" fill="url(#sp381)"/><path d="M11 0V18" stroke="#eee" stroke-width="1.5"/></svg>
<svg style="left:492px;top:1056px" width="14" height="18" viewBox="0 0 14 18"><defs><linearGradient id="sp492" x1="0" x2="1"><stop offset="0" stop-color="#555"/><stop offset="1" stop-color="#d8d8d8"/></linearGradient></defs><path d="M0 6H4L11 0V18L4 12H0Z" fill="url(#sp492)"/><path d="M11 0V18" stroke="#eee" stroke-width="1.5"/></svg>
<div class="a" style="left:407px;top:1051px;width:36px;height:29px;background:#2e2e2e"></div>
<svg style="left:413.2px;top:1053.3px" width="24" height="24" viewBox="0 0 20 20"><g stroke="#f5792a" stroke-linecap="round" fill="none"><path d="M2.8 13.3L8.6 9.2" stroke-width="2.3"/><path d="M5 7.7L10.5 7.3" stroke-width="2"/><path d="M9.4 4.5L12.4 6.9" stroke-width="2"/></g><circle cx="11.8" cy="10.9" r="4.3" fill="#fff" stroke="#f5792a" stroke-width="2.1"/><circle cx="12" cy="10.7" r="1.9" fill="#0c3f90"/></svg>
<svg style="left:453px;top:1056px" width="19" height="19" viewBox="0 0 19 19"><circle cx="6" cy="10" r="4.6" fill="#f05a10"/><circle cx="14" cy="3.5" r="2.4" fill="#f05a10"/><circle cx="15.5" cy="15" r="2.6" fill="#f05a10"/></svg>
<div class="a" style="left:115px;top:1078px;width:28px;height:2px;background:#8a8a8a"></div>
<div class="a" style="left:152px;top:1078px;width:28px;height:2px;background:#8a8a8a"></div>
<div class="a" style="left:263px;top:1078px;width:28px;height:2px;background:#8a8a8a"></div>
<div class="a" style="left:337px;top:1078px;width:28px;height:2px;background:#8a8a8a"></div>
<div class="a" style="left:374px;top:1078px;width:28px;height:2px;background:#8a8a8a"></div>
<div class="a" style="left:407px;top:1078px;width:36px;height:2px;background:#8a8a8a"></div>
<div class="a" style="left:448px;top:1078px;width:28px;height:2px;background:#8a8a8a"></div>
<div class="a" style="left:485px;top:1078px;width:28px;height:2px;background:#8a8a8a"></div>
<svg style="left:1736px;top:1060px" width="14" height="9" viewBox="0 0 14 9"><path d="M1 8L7 2L13 8" fill="none" stroke="#fff" stroke-width="1.4"/></svg>
<svg style="left:1759px;top:1058px" width="17" height="14" viewBox="0 0 17 14"><rect x="3" y="4" width="12" height="7" fill="none" stroke="#fff" stroke-width="1.2"/><rect x="15.5" y="6" width="1.5" height="3" fill="#fff"/><rect x="4.5" y="5.5" width="9" height="4" fill="#fff"/><path d="M1 1V7M0 3H5" stroke="#fff" stroke-width="1.2"/></svg>
<svg style="left:1784px;top:1058px" width="16" height="15" viewBox="0 0 16 15"><path d="M1 12A12 12 0 0 1 13 1M4 13A9 9 0 0 1 13 4.5M7 14A6 6 0 0 1 13 8" fill="none" stroke="#fff" stroke-width="1.2"/><circle cx="12" cy="13" r="1.6" fill="#fff"/></svg>
<svg style="left:1808px;top:1058px" width="17" height="15" viewBox="0 0 17 15"><path d="M0 5H3L7 1.5V13.5L3 10H0Z" fill="none" stroke="#fff" stroke-width="1.1"/><path d="M9.5 5Q11 7.5 9.5 10M11.5 3Q14.5 7.5 11.5 12M13.5 1.5Q17.5 7.5 13.5 13.5" fill="none" stroke="#fff" stroke-width="1"/></svg>
<div class="a" style="left:1833px;top:1055px;line-height:20px;font-size:11.5px;letter-spacing:-.3px;color:#fff">20:39</div>
<svg style="left:1879px;top:1058px" width="17" height="16" viewBox="0 0 17 16"><path d="M1 1H16V12H8L5 15V12H1Z" fill="none" stroke="#fff" stroke-width="1.2"/></svg>
<div class="a" style="left:1915px;top:1052px;width:1px;height:28px;background:#7a7a7a"></div>
<div class="a " style="left:1665px;top:50px;width:1px;height:1000px;background:#0a0a0a"></div>
<div class="a " style="left:1666px;top:50px;width:254px;height:26px;background:#686868"></div>
<div class="a menu lbl " style="left:1675px;top:54px;width:32px;height:20px;line-height:20px;"></div>
<svg style="left:1679px;top:56px" width="16" height="16" viewBox="0 0 16 16"><path d="M3.5 3V13.5H8M3.5 8H8" fill="none" stroke="#e8e8e8" stroke-width="1.2"/><rect x="1" y="1" width="7" height="3" fill="#f0b040" stroke="#3a2a08" stroke-width=".6"/><rect x="8" y="6.5" width="7" height="3" fill="#e8e8e8" stroke="#222" stroke-width=".6"/><rect x="8" y="12" width="7" height="3" fill="#e8e8e8" stroke="#222" stroke-width=".6"/></svg>
<svg style="left:1698px;top:54px" width="8" height="20" viewBox="0 0 8 20"><path d="M0.5 8.5 L3.5 3.5 L6.5 8.5Z M0.5 11.5 L3.5 16.5 L6.5 11.5Z" fill="#d0d0d0"/></svg>
<div class="a t" style="left:1719px;top:54px;height:20px;line-height:20px;">View</div>
<div class="a t" style="left:1764px;top:54px;height:20px;line-height:20px;">Search</div>
<div class="a menu lbl" style="left:1811px;top:54px;width:120px;height:20px;padding-left:7px">All Scenes</div>
<svg style="left:1908px;top:50px" width="12" height="12" viewBox="0 0 12 12"><path d="M1 0 L12 11 M5 0 L12 7 M9 0 L12 3" stroke="#2e2e2e" stroke-width="1.2" fill="none"/><path d="M2.4 0 L12 9.6 M6.4 0 L12 5.6 M10.4 0 L12 1.6" stroke="#9a9a9a" stroke-width="0.9" fill="none"/></svg>
<div class="a " style="left:1666px;top:76px;width:254px;height:148px;background:#727272;overflow:hidden"></div>
<div class="a " style="left:1666px;top:97px;width:254px;height:20px;background:rgba(255,255,255,.035)"></div>
<div class="a " style="left:1666px;top:137px;width:254px;height:20px;background:rgba(255,255,255,.035)"></div>
<div class="a " style="left:1666px;top:177px;width:254px;height:20px;background:rgba(255,255,255,.035)"></div>
<div class="a " style="left:1666px;top:77px;width:177px;height:20px;background:#868b90"></div>
<div class="a " style="left:1843px;top:76px;width:1px;height:130px;background:rgba(0,0,0,.18)"></div>
<div class="a " style="left:1863px;top:76px;width:1px;height:130px;background:rgba(0,0,0,.18)"></div>
<div class="a " style="left:1883px;top:76px;width:1px;height:130px;background:rgba(0,0,0,.18)"></div>
<div class="a " style="left:1696px;top:97px;width:1px;height:108px;background:#333"></div>
<div class="a " style="left:1681px;top:87px;width:10px;height:1px;background:#333"></div>
<svg style="left:1670.5px;top:81.5px" width="11" height="11"><circle cx="5.5" cy="5.5" r="4.3" fill="#e8e8e8" stroke="#111" stroke-width="1"/><path d="M3 5.5H8" stroke="#111" stroke-width="1.2"/></svg>
<svg style="left:1688px;top:78px" width="18" height="18"><circle cx="9" cy="9" r="9" fill="#fff" fill-opacity=".28"/></svg>
<svg style="left:1689px;top:79px" width="16" height="16" viewBox="0 0 16 16"><rect x="8" y="2" width="6" height="10" rx="2.5" fill="#4a7ad8" stroke="#1b2c50" stroke-width=".8"/><rect x="9" y="3" width="2" height="8" rx="1" fill="#a8c8ff"/><circle cx="6" cy="11" r="3.6" fill="#e8e8e8" stroke="#333" stroke-width=".8"/><circle cx="5" cy="10" r="1.4" fill="#fff"/><circle cx="3.5" cy="3.5" r="2" fill="#f5e663" stroke="#7a6a10" stroke-width=".7"/></svg>
<div class="a t" style="left:1709px;top:77.5px;height:20px;line-height:20px;font-size:11px">Scene</div>
<svg style="left:1690.5px;top:101.5px" width="11" height="11"><circle cx="5.5" cy="5.5" r="4.3" fill="#e8e8e8" stroke="#111" stroke-width="1"/><path d="M3.2 5.5H7.8M5.5 3.2V7.8" stroke="#111" stroke-width="1.1"/></svg>
<svg style="left:1708px;top:98px" width="18" height="18" viewBox="0 0 18 18"><rect x="4.5" y="4.5" width="11" height="11" fill="#e8dfb0" stroke="#222" stroke-width=".9" transform="rotate(12 10 10)"/><rect x="2" y="1.5" width="11" height="12" fill="#f4f4f4" stroke="#222" stroke-width=".9"/><rect x="7.5" y="3.5" width="3.5" height="6" rx="1.5" fill="#4a7ad8" stroke="#1b2c50" stroke-width=".6"/><circle cx="6" cy="9.5" r="2.2" fill="#ddd" stroke="#333" stroke-width=".6"/><circle cx="4.5" cy="4" r="1.2" fill="#f5e663"/></svg>
<div class="a t" style="left:1729px;top:97.5px;height:20px;line-height:20px;font-size:11px">RenderLayers</div>
<div class="a " style="left:1808px;top:100px;width:1px;height:14px;background:#2a2a2a"></div>
<svg style="left:1817px;top:98px" width="18" height="18"><circle cx="9" cy="9" r="9" fill="#fff" fill-opacity=".25"/></svg>
<svg style="left:1818px;top:98px" width="18" height="18" viewBox="0 0 18 18"><rect x="4.5" y="4.5" width="11" height="11" fill="#e8dfb0" stroke="#222" stroke-width=".9" transform="rotate(12 10 10)"/><rect x="2" y="1.5" width="11" height="12" fill="#f4f4f4" stroke="#222" stroke-width=".9"/><rect x="7.5" y="3.5" width="3.5" height="6" rx="1.5" fill="#4a7ad8" stroke="#1b2c50" stroke-width=".6"/><circle cx="6" cy="9.5" r="2.2" fill="#ddd" stroke="#333" stroke-width=".6"/><circle cx="4.5" cy="4" r="1.2" fill="#f5e663"/></svg>
<svg style="left:1707px;top:118px" width="18" height="18" viewBox="0 0 18 18"><circle cx="9" cy="9" r="8.6" fill="#a8a8c8" fill-opacity=".55"/><circle cx="9" cy="9" r="6.4" fill="#3a78d0" stroke="#1a2a50" stroke-width=".9"/><path d="M5 5.5Q7.5 3.5 10 4.5Q11 6.5 8.5 7.5Q8 9.5 6 9Q4 7.5 5 5.5Z M10 9.5Q13 8.5 14 10.5Q13 13.5 10.5 14Q9.5 11.5 10 9.5Z" fill="#58b048"/><path d="M5 5Q7 3.2 9 3.3" stroke="#fff" stroke-opacity=".7" fill="none"/></svg>
<div class="a t" style="left:1729px;top:117.5px;height:20px;line-height:20px;font-size:11px">World</div>
<svg style="left:1690.5px;top:141.5px" width="11" height="11"><circle cx="5.5" cy="5.5" r="4.3" fill="#e8e8e8" stroke="#111" stroke-width="1"/><path d="M3.2 5.5H7.8M5.5 3.2V7.8" stroke="#111" stroke-width="1.1"/></svg>
<div class="a " style="left:1701px;top:147px;width:8px;height:1px;background:#333"></div>
<svg style="left:1707px;top:138px" width="18" height="18" viewBox="0 0 18 18"><g opacity="1"><circle cx="5.5" cy="5" r="3.2" fill="#e88a28" stroke="#5a2e08" stroke-width=".9"/><circle cx="11.5" cy="4.5" r="2.8" fill="#e88a28" stroke="#5a2e08" stroke-width=".9"/><rect x="3" y="8" width="10" height="6.5" rx="1" fill="#e88a28" stroke="#5a2e08" stroke-width=".9"/><path d="M13 10L17 8.5V14.5L13 13Z" fill="#e88a28" stroke="#5a2e08" stroke-width=".9"/><circle cx="5.5" cy="5" r="1" fill="#fff" fill-opacity=".8"/><circle cx="11.5" cy="4.5" r=".9" fill="#fff" fill-opacity=".8"/></g></svg>
<div class="a t" style="left:1729px;top:137.5px;height:20px;line-height:20px;font-size:11px">Camera</div>
<div class="a " style="left:1779px;top:140px;width:1px;height:14px;background:#2a2a2a"></div>
<svg style="left:1789px;top:138px" width="18" height="18"><circle cx="9" cy="9" r="9" fill="#fff" fill-opacity=".25"/></svg>
<svg style="left:1789px;top:138px" width="18" height="18" viewBox="0 0 18 18"><g opacity="0.8"><circle cx="5.5" cy="5" r="3.2" fill="#9a9a9a" stroke="#5a5a5a" stroke-width=".9"/><circle cx="11.5" cy="4.5" r="2.8" fill="#9a9a9a" stroke="#5a5a5a" stroke-width=".9"/><rect x="3" y="8" width="10" height="6.5" rx="1" fill="#9a9a9a" stroke="#5a5a5a" stroke-width=".9"/><path d="M13 10L17 8.5V14.5L13 13Z" fill="#9a9a9a" stroke="#5a5a5a" stroke-width=".9"/><circle cx="5.5" cy="5" r="1" fill="#fff" fill-opacity=".8"/><circle cx="11.5" cy="4.5" r=".9" fill="#fff" fill-opacity=".8"/></g></svg>
<svg style="left:1846px;top:139px" width="16" height="16" viewBox="0 0 16 16"><path d="M.8 8Q8 .6 15.2 8Q8 14.8 .8 8Z" fill="#f6f6f6" stroke="#1e1e1e" stroke-width="1"/><circle cx="8" cy="7.6" r="2.9" fill="#9a9a9a" stroke="#3a3a3a" stroke-width=".7"/><circle cx="8" cy="7.6" r="1.3" fill="#1a1a1a"/><circle cx="7" cy="6.6" r=".7" fill="#fff"/></svg>
<svg style="left:1867px;top:139px" width="16" height="16" viewBox="0 0 16 16"><path d="M4 1.5V13L7 10.2L9.2 15L11 14.2L8.8 9.6H12.6Z" fill="#f4f4f4" stroke="#111" stroke-width="1"/></svg>
<svg style="left:1885px;top:139px" width="16" height="16" viewBox="0 0 16 16"><rect x="1.2" y="4" width="13.6" height="10" rx="1" fill="#dcdcdc" stroke="#1a1a1a" stroke-width="1"/><path d="M3.2 4V2.4H7.2V4" fill="#dcdcdc" stroke="#1a1a1a" stroke-width=".9"/><rect x="2.4" y="5.2" width="1.4" height="1.2" fill="#e02020"/><circle cx="8.8" cy="9.4" r="3.3" fill="#6a6a6a" stroke="#1a1a1a" stroke-width=".9"/><circle cx="8.8" cy="9.4" r="2" fill="#3a3a4a"/><circle cx="9.6" cy="10.1" r="1.1" fill="#c03838"/><circle cx="7.9" cy="8.4" r=".7" fill="#9ab"/></svg>
<svg style="left:1690.5px;top:161.5px" width="11" height="11"><circle cx="5.5" cy="5.5" r="4.3" fill="#e8e8e8" stroke="#111" stroke-width="1"/><path d="M3.2 5.5H7.8M5.5 3.2V7.8" stroke="#111" stroke-width="1.1"/></svg>
<div class="a " style="left:1701px;top:167px;width:8px;height:1px;background:#333"></div>
<svg style="left:1709px;top:159px" width="16" height="16" viewBox="0 0 16 16"><g opacity="1"><path d="M3 3.5H13L8 13Z" fill="none" stroke="#222" stroke-width="2.8"/><path d="M3 3.5H13L8 13Z" fill="none" stroke="#e8872a" stroke-width="1.5"/><circle cx="3" cy="3.5" r="1.5" fill="#fff" stroke="#222" stroke-width=".8"/><circle cx="13" cy="3.5" r="1.5" fill="#fff" stroke="#222" stroke-width=".8"/><circle cx="8" cy="13" r="1.5" fill="#fff" stroke="#222" stroke-width=".8"/></g></svg>
<div class="a t" style="left:1729px;top:157.5px;height:20px;line-height:20px;font-size:11px">Circle</div>
<div class="a " style="left:1769px;top:160px;width:1px;height:14px;background:#2a2a2a"></div>
<svg style="left:1780px;top:159px" width="16" height="16" viewBox="0 0 16 16"><g opacity="0.7"><path d="M3 3.5H13L8 13Z" fill="none" stroke="#4a4a4a" stroke-width="1.5"/><circle cx="3" cy="3.5" r="1.5" fill="#fff" stroke="#222" stroke-width=".8"/><circle cx="13" cy="3.5" r="1.5" fill="#fff" stroke="#222" stroke-width=".8"/><circle cx="8" cy="13" r="1.5" fill="#fff" stroke="#222" stroke-width=".8"/></g></svg>
<svg style="left:1846px;top:159px" width="16" height="16" viewBox="0 0 16 16"><path d="M.8 8Q8 .6 15.2 8Q8 14.8 .8 8Z" fill="#f6f6f6" stroke="#1e1e1e" stroke-width="1"/><circle cx="8" cy="7.6" r="2.9" fill="#9a9a9a" stroke="#3a3a3a" stroke-width=".7"/><circle cx="8" cy="7.6" r="1.3" fill="#1a1a1a"/><circle cx="7" cy="6.6" r=".7" fill="#fff"/></svg>
<svg style="left:1867px;top:159px" width="16" height="16" viewBox="0 0 16 16"><path d="M4 1.5V13L7 10.2L9.2 15L11 14.2L8.8 9.6H12.6Z" fill="#f4f4f4" stroke="#111" stroke-width="1"/></svg>
<svg style="left:1885px;top:159px" width="16" height="16" viewBox="0 0 16 16"><rect x="1.2" y="4" width="13.6" height="10" rx="1" fill="#dcdcdc" stroke="#1a1a1a" stroke-width="1"/><path d="M3.2 4V2.4H7.2V4" fill="#dcdcdc" stroke="#1a1a1a" stroke-width=".9"/><rect x="2.4" y="5.2" width="1.4" height="1.2" fill="#e02020"/><circle cx="8.8" cy="9.4" r="3.3" fill="#6a6a6a" stroke="#1a1a1a" stroke-width=".9"/><circle cx="8.8" cy="9.4" r="2" fill="#3a3a4a"/><circle cx="9.6" cy="10.1" r="1.1" fill="#c03838"/><circle cx="7.9" cy="8.4" r=".7" fill="#9ab"/></svg>
<svg style="left:1690.5px;top:181.5px" width="11" height="11"><circle cx="5.5" cy="5.5" r="4.3" fill="#e8e8e8" stroke="#111" stroke-width="1"/><path d="M3.2 5.5H7.8M5.5 3.2V7.8" stroke="#111" stroke-width="1.1"/></svg>
<div class="a " style="left:1701px;top:187px;width:8px;height:1px;background:#333"></div>
<svg style="left:1709px;top:179px" width="16" height="16" viewBox="0 0 16 16"><g opacity="1"><path d="M3 3.5H13L8 13Z" fill="none" stroke="#222" stroke-width="2.8"/><path d="M3 3.5H13L8 13Z" fill="none" stroke="#e8872a" stroke-width="1.5"/><circle cx="3" cy="3.5" r="1.5" fill="#fff" stroke="#222" stroke-width=".8"/><circle cx="13" cy="3.5" r="1.5" fill="#fff" stroke="#222" stroke-width=".8"/><circle cx="8" cy="13" r="1.5" fill="#fff" stroke="#222" stroke-width=".8"/></g></svg>
<div class="a t" style="left:1729px;top:177.5px;height:20px;line-height:20px;font-size:11px">Circle.001</div>
<div class="a " style="left:1793px;top:180px;width:1px;height:14px;background:#2a2a2a"></div>
<svg style="left:1804px;top:179px" width="16" height="16" viewBox="0 0 16 16"><g opacity="0.7"><path d="M3 3.5H13L8 13Z" fill="none" stroke="#4a4a4a" stroke-width="1.5"/><circle cx="3" cy="3.5" r="1.5" fill="#fff" stroke="#222" stroke-width=".8"/><circle cx="13" cy="3.5" r="1.5" fill="#fff" stroke="#222" stroke-width=".8"/><circle cx="8" cy="13" r="1.5" fill="#fff" stroke="#222" stroke-width=".8"/></g></svg>
<svg style="left:1824px;top:179px" width="16" height="16" viewBox="0 0 16 16"><path d="M2 14.2L3.6 15.6L10 8.8Q13 9.6 14.6 7Q15.4 5.2 14.8 3.6L12.2 6L10.2 4L12.6 1.4Q10.6.8 8.8 2Q6.8 3.8 7.8 6.6Z" fill="#5a8ad8" stroke="#1a2a50" stroke-width=".9"/></svg>
<svg style="left:1846px;top:179px" width="16" height="16" viewBox="0 0 16 16"><path d="M.8 8Q8 .6 15.2 8Q8 14.8 .8 8Z" fill="#f6f6f6" stroke="#1e1e1e" stroke-width="1"/><circle cx="8" cy="7.6" r="2.9" fill="#9a9a9a" stroke="#3a3a3a" stroke-width=".7"/><circle cx="8" cy="7.6" r="1.3" fill="#1a1a1a"/><circle cx="7" cy="6.6" r=".7" fill="#fff"/></svg>
<svg style="left:1867px;top:179px" width="16" height="16" viewBox="0 0 16 16"><path d="M4 1.5V13L7 10.2L9.2 15L11 14.2L8.8 9.6H12.6Z" fill="#f4f4f4" stroke="#111" stroke-width="1"/></svg>
<svg style="left:1885px;top:179px" width="16" height="16" viewBox="0 0 16 16"><rect x="1.2" y="4" width="13.6" height="10" rx="1" fill="#dcdcdc" stroke="#1a1a1a" stroke-width="1"/><path d="M3.2 4V2.4H7.2V4" fill="#dcdcdc" stroke="#1a1a1a" stroke-width=".9"/><rect x="2.4" y="5.2" width="1.4" height="1.2" fill="#e02020"/><circle cx="8.8" cy="9.4" r="3.3" fill="#6a6a6a" stroke="#1a1a1a" stroke-width=".9"/><circle cx="8.8" cy="9.4" r="2" fill="#3a3a4a"/><circle cx="9.6" cy="10.1" r="1.1" fill="#c03838"/><circle cx="7.9" cy="8.4" r=".7" fill="#9ab"/></svg>
<svg style="left:1690.5px;top:201.5px" width="11" height="11"><circle cx="5.5" cy="5.5" r="4.3" fill="#e8e8e8" stroke="#111" stroke-width="1"/><path d="M3.2 5.5H7.8M5.5 3.2V7.8" stroke="#111" stroke-width="1.1"/></svg>
<div class="a " style="left:1701px;top:207px;width:8px;height:1px;background:#333"></div>
<svg style="left:1706px;top:197px" width="20" height="20"><circle cx="10" cy="10" r="10" fill="#c88a4a" fill-opacity=".8"/></svg>
<svg style="left:1709px;top:199px" width="16" height="16" viewBox="0 0 16 16"><g opacity="1"><path d="M3 3.5H13L8 13Z" fill="none" stroke="#222" stroke-width="2.8"/><path d="M3 3.5H13L8 13Z" fill="none" stroke="#e8872a" stroke-width="1.5"/><circle cx="3" cy="3.5" r="1.5" fill="#fff" stroke="#222" stroke-width=".8"/><circle cx="13" cy="3.5" r="1.5" fill="#fff" stroke="#222" stroke-width=".8"/><circle cx="8" cy="13" r="1.5" fill="#fff" stroke="#222" stroke-width=".8"/></g></svg>
<div class="a t" style="left:1729px;top:197.5px;height:20px;line-height:20px;font-size:11px">Cube</div>
<div class="a " style="left:1765px;top:200px;width:1px;height:14px;background:#2a2a2a"></div>
<svg style="left:1776px;top:199px" width="16" height="16" viewBox="0 0 16 16"><g opacity="0.7"><path d="M3 3.5H13L8 13Z" fill="none" stroke="#4a4a4a" stroke-width="1.5"/><circle cx="3" cy="3.5" r="1.5" fill="#fff" stroke="#222" stroke-width=".8"/><circle cx="13" cy="3.5" r="1.5" fill="#fff" stroke="#222" stroke-width=".8"/><circle cx="8" cy="13" r="1.5" fill="#fff" stroke="#222" stroke-width=".8"/></g></svg>
<svg style="left:1846px;top:199px" width="16" height="16" viewBox="0 0 16 16"><path d="M.8 8Q8 .6 15.2 8Q8 14.8 .8 8Z" fill="#f6f6f6" stroke="#1e1e1e" stroke-width="1"/><circle cx="8" cy="7.6" r="2.9" fill="#9a9a9a" stroke="#3a3a3a" stroke-width=".7"/><circle cx="8" cy="7.6" r="1.3" fill="#1a1a1a"/><circle cx="7" cy="6.6" r=".7" fill="#fff"/></svg>
<svg style="left:1867px;top:199px" width="16" height="16" viewBox="0 0 16 16"><path d="M4 1.5V13L7 10.2L9.2 15L11 14.2L8.8 9.6H12.6Z" fill="#f4f4f4" stroke="#111" stroke-width="1"/></svg>
<svg style="left:1885px;top:199px" width="16" height="16" viewBox="0 0 16 16"><rect x="1.2" y="4" width="13.6" height="10" rx="1" fill="#dcdcdc" stroke="#1a1a1a" stroke-width="1"/><path d="M3.2 4V2.4H7.2V4" fill="#dcdcdc" stroke="#1a1a1a" stroke-width=".9"/><rect x="2.4" y="5.2" width="1.4" height="1.2" fill="#e02020"/><circle cx="8.8" cy="9.4" r="3.3" fill="#6a6a6a" stroke="#1a1a1a" stroke-width=".9"/><circle cx="8.8" cy="9.4" r="2" fill="#3a3a4a"/><circle cx="9.6" cy="10.1" r="1.1" fill="#c03838"/><circle cx="7.9" cy="8.4" r=".7" fill="#9ab"/></svg>
<div class="a " style="left:1666px;top:205px;width:254px;height:19px;background:#727272"></div>
<div class="a " style="left:1671px;top:207px;width:227px;height:13px;background:linear-gradient(#5c5c5c,#676767);border:1px solid #4a4a4a;border-radius:7px"></div>
<div class="a " style="left:1671px;top:207px;width:178px;height:13px;background:linear-gradient(#888,#7a7a7a);border:1px solid #454545;border-radius:7px"></div>
<div class="a " style="left:1903px;top:81px;width:13px;height:121px;background:linear-gradient(90deg,#5c5c5c,#676767);border:1px solid #4a4a4a;border-radius:7px"></div>
<div class="a " style="left:1903px;top:81px;width:13px;height:39px;background:linear-gradient(90deg,#888,#7a7a7a);border:1px solid #454545;border-radius:7px"></div>
<svg style="left:1666px;top:212px" width="12" height="12" viewBox="0 0 12 12"><path d="M0 1 L11 12 M0 5 L7 12 M0 9 L3 12" stroke="#2e2e2e" stroke-width="1.2" fill="none"/><path d="M0 2.4 L9.6 12 M0 6.4 L5.6 12 M0 10.4 L1.6 12" stroke="#9a9a9a" stroke-width="0.9" fill="none"/></svg>
<div class="a " style="left:1666px;top:224px;width:254px;height:2px;background:#0a0a0a"></div>
<div class="a " style="left:1666px;top:226px;width:254px;height:26px;background:#686868"></div>
<div class="a menu lbl " style="left:1675px;top:229px;width:32px;height:19px;line-height:19.5px;"></div>
<svg style="left:1679px;top:230px" width="16" height="16" viewBox="0 0 16 16"><rect x="1" y="2" width="14" height="5" rx="1.5" fill="#e8e8e8" stroke="#1a1a1a" stroke-width=".9"/><rect x="1" y="9" width="14" height="5" rx="1.5" fill="#e8e8e8" stroke="#1a1a1a" stroke-width=".9"/><rect x="9" y="3.2" width="4.5" height="2.6" fill="#555"/><rect x="2.5" y="10.2" width="4.5" height="2.6" fill="#555"/></svg>
<svg style="left:1698px;top:228.5px" width="8" height="20" viewBox="0 0 8 20"><path d="M0.5 8.5 L3.5 3.5 L6.5 8.5Z M0.5 11.5 L3.5 16.5 L6.5 11.5Z" fill="#d0d0d0"/></svg>
<div class="a menu lbl r0 tl bl" style="left:1715px;top:229px;width:21px;height:19px;line-height:19.5px;"></div>
<svg style="opacity:.78;left:1717px;top:230px" width="16" height="16" viewBox="0 0 16 16"><rect x="1.2" y="4" width="13.6" height="10" rx="1" fill="#dcdcdc" stroke="#1a1a1a" stroke-width="1"/><path d="M3.2 4V2.4H7.2V4" fill="#dcdcdc" stroke="#1a1a1a" stroke-width=".9"/><rect x="2.4" y="5.2" width="1.4" height="1.2" fill="#e02020"/><circle cx="8.8" cy="9.4" r="3.3" fill="#6a6a6a" stroke="#1a1a1a" stroke-width=".9"/><circle cx="8.8" cy="9.4" r="2" fill="#3a3a4a"/><circle cx="9.6" cy="10.1" r="1.1" fill="#c03838"/><circle cx="7.9" cy="8.4" r=".7" fill="#9ab"/></svg>
<div class="a menu lbl r0" style="left:1735px;top:229px;width:21px;height:19px;line-height:19.5px;"></div>
<svg style="opacity:.78;left:1737px;top:230px" width="16" height="16" viewBox="0 0 16 16"><rect x="4" y="4" width="10" height="10" fill="#e8dfb0" stroke="#222" stroke-width=".8" transform="rotate(12 9 9)"/><rect x="1.5" y="1.5" width="10" height="11" fill="#f4f4f4" stroke="#222" stroke-width=".8"/><rect x="6.5" y="3" width="3" height="5.5" rx="1.3" fill="#4a7ad8"/><circle cx="5" cy="8.5" r="2" fill="#ddd" stroke="#333" stroke-width=".5"/></svg>
<div class="a menu lbl r0" style="left:1755px;top:229px;width:21px;height:19px;line-height:19.5px;"></div>
<svg style="opacity:.78;left:1757px;top:230px" width="16" height="16" viewBox="0 0 16 16"><rect x="8" y="2" width="6" height="10" rx="2.5" fill="#4a7ad8" stroke="#1b2c50" stroke-width=".8"/><rect x="9" y="3" width="2" height="8" rx="1" fill="#a8c8ff"/><circle cx="6" cy="11" r="3.6" fill="#e8e8e8" stroke="#333" stroke-width=".8"/><circle cx="5" cy="10" r="1.4" fill="#fff"/><circle cx="3.5" cy="3.5" r="2" fill="#f5e663" stroke="#7a6a10" stroke-width=".7"/></svg>
<div class="a menu lbl r0" style="left:1775px;top:229px;width:21px;height:19px;line-height:19.5px;"></div>
<svg style="opacity:.78;left:1777px;top:230px" width="16" height="16" viewBox="0 0 16 16"><circle cx="8" cy="8" r="6.2" fill="#3a78d0" stroke="#1a2a50" stroke-width=".9"/><path d="M4 4.5Q6.5 2.5 9 3.5Q10 5.5 7.5 6.5Q7 8.5 5 8Q3 6.5 4 4.5Z M9 8.5Q12 7.5 13 9.5Q12 12.5 9.5 13Q8.5 10.5 9 8.5Z" fill="#58b048"/></svg>
<div class="a menu lbl r0" style="left:1795px;top:229px;width:21px;height:19px;line-height:19.5px;"></div>
<svg style="opacity:.78;left:1797px;top:230px" width="16" height="16" viewBox="0 0 16 16"><path d="M8 1L14.5 4V11.5L8 15L1.5 11.5V4Z" fill="#f0a040" stroke="#6a3a08" stroke-width=".9"/><path d="M8 1L14.5 4L8 7.2L1.5 4Z" fill="#ffd9a0"/><path d="M8 7.2V15L14.5 11.5V4Z" fill="#d07818"/><path d="M1.5 4L8 7.2L14.5 4M8 7.2V15" stroke="#fff" stroke-opacity=".7" stroke-width=".8" fill="none"/></svg>
<div class="a menu lbl r0" style="left:1815px;top:229px;width:21px;height:19px;line-height:19.5px;"></div>
<svg style="opacity:.78;left:1817px;top:230px" width="16" height="16" viewBox="0 0 16 16"><rect x="1.5" y="7" width="8" height="5" rx="2.5" fill="none" stroke="#1a1a1a" stroke-width="2.8" transform="rotate(-35 5.5 9.5)"/><rect x="1.5" y="7" width="8" height="5" rx="2.5" fill="none" stroke="#d8d8d8" stroke-width="1.3" transform="rotate(-35 5.5 9.5)"/><rect x="6.5" y="4" width="8" height="5" rx="2.5" fill="none" stroke="#1a1a1a" stroke-width="2.8" transform="rotate(-35 10.5 6.5)"/><rect x="6.5" y="4" width="8" height="5" rx="2.5" fill="none" stroke="#d8d8d8" stroke-width="1.3" transform="rotate(-35 10.5 6.5)"/></svg>
<div class="a menu lbl r0" style="left:1835px;top:229px;width:21px;height:19px;line-height:19.5px;"></div>
<svg style="opacity:.78;left:1837px;top:230px" width="16" height="16" viewBox="0 0 16 16"><path d="M2 14.2L3.6 15.6L10 8.8Q13 9.6 14.6 7Q15.4 5.2 14.8 3.6L12.2 6L10.2 4L12.6 1.4Q10.6.8 8.8 2Q6.8 3.8 7.8 6.6Z" fill="#5a8ad8" stroke="#1a2a50" stroke-width=".9"/></svg>
<div class="a menu sel lbl r0" style="left:1855px;top:229px;width:21px;height:19px;line-height:19.5px;"></div>
<svg style="left:1857px;top:230px" width="16" height="16" viewBox="0 0 16 16"><g opacity="1"><path d="M3 3.5H13L8 13Z" fill="none" stroke="#222" stroke-width="2.8"/><path d="M3 3.5H13L8 13Z" fill="none" stroke="#f0f0f0" stroke-width="1.5"/><circle cx="3" cy="3.5" r="1.5" fill="#fff" stroke="#222" stroke-width=".8"/><circle cx="13" cy="3.5" r="1.5" fill="#fff" stroke="#222" stroke-width=".8"/><circle cx="8" cy="13" r="1.5" fill="#fff" stroke="#222" stroke-width=".8"/></g></svg>
<div class="a menu lbl r0" style="left:1875px;top:229px;width:21px;height:19px;line-height:19.5px;"></div>
<svg style="opacity:.78;left:1877px;top:230px" width="16" height="16" viewBox="0 0 16 16"><defs><radialGradient id="mg" cx=".35" cy=".3" r=".8"><stop offset="0" stop-color="#fff"/><stop offset=".5" stop-color="#c89080"/><stop offset="1" stop-color="#402018"/></radialGradient></defs><circle cx="8" cy="8" r="6.3" fill="url(#mg)" stroke="#1a1a1a" stroke-width=".8"/><path d="M8 8V1.7A6.3 6.3 0 0 1 14.3 8ZM8 8V14.3A6.3 6.3 0 0 1 1.7 8Z" fill="#000" fill-opacity=".28"/></svg>
<div class="a menu lbl r0" style="left:1895px;top:229px;width:21px;height:19px;line-height:19.5px;"></div>
<svg style="opacity:.78;left:1897px;top:230px" width="16" height="16" viewBox="0 0 16 16"><rect x="2" y="2" width="3" height="3" fill="#c83020"/><rect x="2" y="5" width="3" height="3" fill="#f0e8e0"/><rect x="2" y="8" width="3" height="3" fill="#c83020"/><rect x="2" y="11" width="3" height="3" fill="#f0e8e0"/><rect x="5" y="2" width="3" height="3" fill="#f0e8e0"/><rect x="5" y="5" width="3" height="3" fill="#c83020"/><rect x="5" y="8" width="3" height="3" fill="#f0e8e0"/><rect x="5" y="11" width="3" height="3" fill="#c83020"/><rect x="8" y="2" width="3" height="3" fill="#c83020"/><rect x="8" y="5" width="3" height="3" fill="#f0e8e0"/><rect x="8" y="8" width="3" height="3" fill="#c83020"/><rect x="8" y="11" width="3" height="3" fill="#f0e8e0"/><rect x="11" y="2" width="3" height="3" fill="#f0e8e0"/><rect x="11" y="5" width="3" height="3" fill="#c83020"/><rect x="11" y="8" width="3" height="3" fill="#f0e8e0"/><rect x="11" y="11" width="3" height="3" fill="#c83020"/><rect x="2" y="2" width="12" height="12" fill="none" stroke="#3a1a10" stroke-width=".8"/></svg>
<div class="a menu lbl r0" style="left:1915px;top:229px;width:21px;height:19px;line-height:19.5px;"></div>
<svg style="opacity:.78;left:1917px;top:230px" width="16" height="16" viewBox="0 0 16 16"><circle cx="4" cy="5" r="1.5" fill="#fff"/><circle cx="9" cy="9" r="1.5" fill="#fff"/></svg>
<svg style="left:1908px;top:226px" width="12" height="12" viewBox="0 0 12 12"><path d="M1 0 L12 11 M5 0 L12 7 M9 0 L12 3" stroke="#2e2e2e" stroke-width="1.2" fill="none"/><path d="M2.4 0 L12 9.6 M6.4 0 L12 5.6 M10.4 0 L12 1.6" stroke="#9a9a9a" stroke-width="0.9" fill="none"/></svg>
<div class="a " style="left:1666px;top:252px;width:254px;height:798px;background:#727272"></div>
<svg style="left:1675px;top:262px" width="16" height="16" viewBox="0 0 16 16"><path d="M9 1.5L14.5 7L12.5 7.5L9.5 10.5L9.8 13L8 13.5L5.8 10.8L1.5 14.8L1.2 14.5L5.2 10.2L2.5 8L3 6.2L5.5 6.5L8.5 3.5Z" fill="#d8d8d8" stroke="#1a1a1a" stroke-width=".9"/></svg>
<svg style="left:1696px;top:262px" width="16" height="16" viewBox="0 0 16 16"><rect x="8" y="2" width="6" height="10" rx="2.5" fill="#4a7ad8" stroke="#1b2c50" stroke-width=".8"/><rect x="9" y="3" width="2" height="8" rx="1" fill="#a8c8ff"/><circle cx="6" cy="11" r="3.6" fill="#e8e8e8" stroke="#333" stroke-width=".8"/><circle cx="5" cy="10" r="1.4" fill="#fff"/><circle cx="3.5" cy="3.5" r="2" fill="#f5e663" stroke="#7a6a10" stroke-width=".7"/></svg>
<svg style="left:1716px;top:266px" width="6" height="8"><path d="M1 .5L5 4L1 7.5Z" fill="#333"/></svg>
<svg style="left:1736px;top:262px" width="16" height="16" viewBox="0 0 16 16"><path d="M8 1L14.5 4V11.5L8 15L1.5 11.5V4Z" fill="#f0a040" stroke="#6a3a08" stroke-width=".9"/><path d="M8 1L14.5 4L8 7.2L1.5 4Z" fill="#ffd9a0"/><path d="M8 7.2V15L14.5 11.5V4Z" fill="#d07818"/><path d="M1.5 4L8 7.2L14.5 4M8 7.2V15" stroke="#fff" stroke-opacity=".7" stroke-width=".8" fill="none"/></svg>
<div class="a t" style="left:1759px;top:260px;height:20px;line-height:20px;">Cube</div>
<svg style="left:1796px;top:266px" width="6" height="8"><path d="M1 .5L5 4L1 7.5Z" fill="#333"/></svg>
<svg style="left:1816px;top:262px" width="16" height="16" viewBox="0 0 16 16"><g opacity="1"><path d="M3 3.5H13L8 13Z" fill="none" stroke="#2a2a2a" stroke-width="1.5"/><circle cx="3" cy="3.5" r="1.5" fill="#fff" stroke="#222" stroke-width=".8"/><circle cx="13" cy="3.5" r="1.5" fill="#fff" stroke="#222" stroke-width=".8"/><circle cx="8" cy="13" r="1.5" fill="#fff" stroke="#222" stroke-width=".8"/></g></svg>
<div class="a t" style="left:1838px;top:260px;height:20px;line-height:20px;">Cube</div>
<div class="a menu lbl r0 tl bl" style="left:1674px;top:296px;width:33px;height:19px;line-height:19.5px;"></div>
<svg style="left:1678px;top:297px" width="16" height="16" viewBox="0 0 16 16"><g opacity="1"><path d="M3 3.5H13L8 13Z" fill="none" stroke="#222" stroke-width="2.8"/><path d="M3 3.5H13L8 13Z" fill="none" stroke="#e8e8e8" stroke-width="1.5"/><circle cx="3" cy="3.5" r="1.5" fill="#fff" stroke="#222" stroke-width=".8"/><circle cx="13" cy="3.5" r="1.5" fill="#fff" stroke="#222" stroke-width=".8"/><circle cx="8" cy="13" r="1.5" fill="#fff" stroke="#222" stroke-width=".8"/></g></svg>
<svg style="left:1697px;top:295.5px" width="8" height="20" viewBox="0 0 8 20"><path d="M0.5 8.5 L3.5 3.5 L6.5 8.5Z M0.5 11.5 L3.5 16.5 L6.5 11.5Z" fill="#d0d0d0"/></svg>
<div class="a tf lbl r0" style="left:1706px;top:296px;width:176px;height:19px;line-height:19.5px;padding-left:7px">Cube</div>
<div class="a tool ctr r0 tr br" style="left:1881px;top:296px;width:31px;height:19px;line-height:19.5px;">F</div>
<div class="a sep" style="left:1671px;top:323px;width:244px;height:1px;"></div>
<svg style="left:1678px;top:328.5px" width="10" height="10"><path d="M0.5 1 L9.5 1 L5 9.5Z" fill="#1e1e1e"/></svg>
<div class="a ph" style="left:1691px;top:324.5px;height:20px;line-height:20px;">Normals</div>
<svg style="left:1898px;top:333.5px" width="12" height="6"><rect x="0" y="0" width="1" height="1" fill="#c8c8c8" fill-opacity=".55"/><rect x="1" y="1" width="1" height="1" fill="#000" fill-opacity=".35"/><rect x="0" y="3" width="1" height="1" fill="#c8c8c8" fill-opacity=".55"/><rect x="1" y="4" width="1" height="1" fill="#000" fill-opacity=".35"/><rect x="3" y="0" width="1" height="1" fill="#c8c8c8" fill-opacity=".55"/><rect x="4" y="1" width="1" height="1" fill="#000" fill-opacity=".35"/><rect x="3" y="3" width="1" height="1" fill="#c8c8c8" fill-opacity=".55"/><rect x="4" y="4" width="1" height="1" fill="#000" fill-opacity=".35"/><rect x="6" y="0" width="1" height="1" fill="#c8c8c8" fill-opacity=".55"/><rect x="7" y="1" width="1" height="1" fill="#000" fill-opacity=".35"/><rect x="6" y="3" width="1" height="1" fill="#c8c8c8" fill-opacity=".55"/><rect x="7" y="4" width="1" height="1" fill="#000" fill-opacity=".35"/><rect x="9" y="0" width="1" height="1" fill="#c8c8c8" fill-opacity=".55"/><rect x="10" y="1" width="1" height="1" fill="#000" fill-opacity=".35"/><rect x="9" y="3" width="1" height="1" fill="#c8c8c8" fill-opacity=".55"/><rect x="10" y="4" width="1" height="1" fill="#000" fill-opacity=".35"/></svg>
<div class="a chk" style="left:1677px;top:359px;width:14px;height:14px;"></div>
<div class="a t" style="left:1699px;top:356.0px;height:20px;line-height:20px;">Auto Smooth</div>
<div class="a chk" style="left:1800px;top:359px;width:14px;height:14px;"></div>
<div class="a t" style="left:1822px;top:356.0px;height:20px;line-height:20px;">Double Sided</div>
<div class="a num" style="left:1674px;top:378px;width:115px;height:19px;background:linear-gradient(#868686,#909090);border-color:#4a4a4a;"><span class="a" style="left:15px;top:0;line-height:19.5px;color:#555">Angle:</span><span class="a" style="right:15px;top:0;line-height:19.5px;color:#555">180°</span><svg style="left:5px;top:4.5px" width="6" height="8"><path d="M5 0.5 L1 4 L5 7.5Z" fill="#7a7a7a"/></svg><svg style="right:5px;top:4.5px" width="6" height="8"><path d="M1 0.5 L5 4 L1 7.5Z" fill="#7a7a7a"/></svg></div>
<div class="a sep" style="left:1671px;top:405px;width:244px;height:1px;"></div>
<svg style="left:1678px;top:411.0px" width="10" height="10"><path d="M1 0.5 L1 9.5 L9.5 5Z" fill="#1e1e1e"/></svg>
<div class="a ph" style="left:1691px;top:407.0px;height:20px;line-height:20px;">Texture Space</div>
<svg style="left:1898px;top:416.0px" width="12" height="6"><rect x="0" y="0" width="1" height="1" fill="#c8c8c8" fill-opacity=".55"/><rect x="1" y="1" width="1" height="1" fill="#000" fill-opacity=".35"/><rect x="0" y="3" width="1" height="1" fill="#c8c8c8" fill-opacity=".55"/><rect x="1" y="4" width="1" height="1" fill="#000" fill-opacity=".35"/><rect x="3" y="0" width="1" height="1" fill="#c8c8c8" fill-opacity=".55"/><rect x="4" y="1" width="1" height="1" fill="#000" fill-opacity=".35"/><rect x="3" y="3" width="1" height="1" fill="#c8c8c8" fill-opacity=".55"/><rect x="4" y="4" width="1" height="1" fill="#000" fill-opacity=".35"/><rect x="6" y="0" width="1" height="1" fill="#c8c8c8" fill-opacity=".55"/><rect x="7" y="1" width="1" height="1" fill="#000" fill-opacity=".35"/><rect x="6" y="3" width="1" height="1" fill="#c8c8c8" fill-opacity=".55"/><rect x="7" y="4" width="1" height="1" fill="#000" fill-opacity=".35"/><rect x="9" y="0" width="1" height="1" fill="#c8c8c8" fill-opacity=".55"/><rect x="10" y="1" width="1" height="1" fill="#000" fill-opacity=".35"/><rect x="9" y="3" width="1" height="1" fill="#c8c8c8" fill-opacity=".55"/><rect x="10" y="4" width="1" height="1" fill="#000" fill-opacity=".35"/></svg>
<div class="a sep" style="left:1671px;top:429px;width:244px;height:1px;"></div>
<svg style="left:1678px;top:435.0px" width="10" height="10"><path d="M0.5 1 L9.5 1 L5 9.5Z" fill="#1e1e1e"/></svg>
<div class="a ph" style="left:1691px;top:431.0px;height:20px;line-height:20px;">Vertex Groups</div>
<svg style="left:1898px;top:440.0px" width="12" height="6"><rect x="0" y="0" width="1" height="1" fill="#c8c8c8" fill-opacity=".55"/><rect x="1" y="1" width="1" height="1" fill="#000" fill-opacity=".35"/><rect x="0" y="3" width="1" height="1" fill="#c8c8c8" fill-opacity=".55"/><rect x="1" y="4" width="1" height="1" fill="#000" fill-opacity=".35"/><rect x="3" y="0" width="1" height="1" fill="#c8c8c8" fill-opacity=".55"/><rect x="4" y="1" width="1" height="1" fill="#000" fill-opacity=".35"/><rect x="3" y="3" width="1" height="1" fill="#c8c8c8" fill-opacity=".55"/><rect x="4" y="4" width="1" height="1" fill="#000" fill-opacity=".35"/><rect x="6" y="0" width="1" height="1" fill="#c8c8c8" fill-opacity=".55"/><rect x="7" y="1" width="1" height="1" fill="#000" fill-opacity=".35"/><rect x="6" y="3" width="1" height="1" fill="#c8c8c8" fill-opacity=".55"/><rect x="7" y="4" width="1" height="1" fill="#000" fill-opacity=".35"/><rect x="9" y="0" width="1" height="1" fill="#c8c8c8" fill-opacity=".55"/><rect x="10" y="1" width="1" height="1" fill="#000" fill-opacity=".35"/><rect x="9" y="3" width="1" height="1" fill="#c8c8c8" fill-opacity=".55"/><rect x="10" y="4" width="1" height="1" fill="#000" fill-opacity=".35"/></svg>
<div class="a " style="left:1674px;top:462px;width:210px;height:59px;background:#828282;border:1px solid #3a3a3a;border-radius:4px;box-shadow:0 1px 0 rgba(255,255,255,.1)"></div>
<svg style="left:1683px;top:504.5px" width="11" height="11"><circle cx="5.5" cy="5.5" r="4" fill="#c2c2c2" stroke="#4c4c4c" stroke-width="1"/><path d="M3.2 5.5H7.8M5.5 3.2V7.8" stroke="#3c3c3c" stroke-width="1.1"/></svg>
<svg style="left:1780px;top:508px" width="15" height="6"><path d="M0 1H15M0 4H15" stroke="#1a1a1a" stroke-width="1"/><path d="M0 2H15M0 5H15" stroke="#fff" stroke-opacity=".6" stroke-width="1"/></svg>
<div class="a tool lbl r0 tl tr" style="left:1892px;top:462px;width:20px;height:20px;line-height:20px;"></div>
<svg style="left:1894px;top:464px" width="16" height="16" viewBox="0 0 16 16"><path d="M8 2.5V13.5M2.5 8H13.5" stroke="#1a1a1a" stroke-width="3.6"/><path d="M8 3.2V12.8M3.2 8H12.8" stroke="#f4f4f4" stroke-width="1.8"/></svg>
<div class="a tool lbl r0" style="left:1892px;top:481px;width:20px;height:21px;line-height:20px;background:linear-gradient(#9a9a9a,#878787)"></div>
<svg style="left:1894px;top:483px" width="16" height="16" viewBox="0 0 16 16"><g opacity="0.45"><path d="M2.5 8H13.5" stroke="#1a1a1a" stroke-width="3.6"/><path d="M3.2 8H12.8" stroke="#f4f4f4" stroke-width="1.8"/></g></svg>
<div class="a menu lbl r0 bl br" style="left:1892px;top:501px;width:20px;height:20px;line-height:20px;"></div>
<svg style="left:1896px;top:506px" width="12" height="10"><path d="M.5 .5H11.5L7 9.5Z" fill="#f0f0f0" stroke="#111" stroke-width=".8"/></svg>
<div class="a sep" style="left:1671px;top:528px;width:244px;height:1px;"></div>
<svg style="left:1678px;top:535.0px" width="10" height="10"><path d="M0.5 1 L9.5 1 L5 9.5Z" fill="#1e1e1e"/></svg>
<div class="a ph" style="left:1691px;top:531.0px;height:20px;line-height:20px;">Shape Keys</div>
<svg style="left:1898px;top:540.0px" width="12" height="6"><rect x="0" y="0" width="1" height="1" fill="#c8c8c8" fill-opacity=".55"/><rect x="1" y="1" width="1" height="1" fill="#000" fill-opacity=".35"/><rect x="0" y="3" width="1" height="1" fill="#c8c8c8" fill-opacity=".55"/><rect x="1" y="4" width="1" height="1" fill="#000" fill-opacity=".35"/><rect x="3" y="0" width="1" height="1" fill="#c8c8c8" fill-opacity=".55"/><rect x="4" y="1" width="1" height="1" fill="#000" fill-opacity=".35"/><rect x="3" y="3" width="1" height="1" fill="#c8c8c8" fill-opacity=".55"/><rect x="4" y="4" width="1" height="1" fill="#000" fill-opacity=".35"/><rect x="6" y="0" width="1" height="1" fill="#c8c8c8" fill-opacity=".55"/><rect x="7" y="1" width="1" height="1" fill="#000" fill-opacity=".35"/><rect x="6" y="3" width="1" height="1" fill="#c8c8c8" fill-opacity=".55"/><rect x="7" y="4" width="1" height="1" fill="#000" fill-opacity=".35"/><rect x="9" y="0" width="1" height="1" fill="#c8c8c8" fill-opacity=".55"/><rect x="10" y="1" width="1" height="1" fill="#000" fill-opacity=".35"/><rect x="9" y="3" width="1" height="1" fill="#c8c8c8" fill-opacity=".55"/><rect x="10" y="4" width="1" height="1" fill="#000" fill-opacity=".35"/></svg>
<div class="a " style="left:1674px;top:562px;width:210px;height:59px;background:#828282;border:1px solid #3a3a3a;border-radius:4px;box-shadow:0 1px 0 rgba(255,255,255,.1)"></div>
<svg style="left:1683px;top:604.5px" width="11" height="11"><circle cx="5.5" cy="5.5" r="4" fill="#c2c2c2" stroke="#4c4c4c" stroke-width="1"/><path d="M3.2 5.5H7.8M5.5 3.2V7.8" stroke="#3c3c3c" stroke-width="1.1"/></svg>
<svg style="left:1780px;top:608px" width="15" height="6"><path d="M0 1H15M0 4H15" stroke="#1a1a1a" stroke-width="1"/><path d="M0 2H15M0 5H15" stroke="#fff" stroke-opacity=".6" stroke-width="1"/></svg>
<div class="a tool lbl r0 tl tr" style="left:1892px;top:562px;width:20px;height:20px;line-height:20px;"></div>
<svg style="left:1894px;top:564px" width="16" height="16" viewBox="0 0 16 16"><path d="M8 2.5V13.5M2.5 8H13.5" stroke="#1a1a1a" stroke-width="3.6"/><path d="M8 3.2V12.8M3.2 8H12.8" stroke="#f4f4f4" stroke-width="1.8"/></svg>
<div class="a tool lbl r0" style="left:1892px;top:581px;width:20px;height:21px;line-height:20px;background:linear-gradient(#9a9a9a,#878787)"></div>
<svg style="left:1894px;top:583px" width="16" height="16" viewBox="0 0 16 16"><g opacity="0.45"><path d="M2.5 8H13.5" stroke="#1a1a1a" stroke-width="3.6"/><path d="M3.2 8H12.8" stroke="#f4f4f4" stroke-width="1.8"/></g></svg>
<div class="a menu lbl r0 bl br" style="left:1892px;top:601px;width:20px;height:20px;line-height:20px;"></div>
<svg style="left:1896px;top:606px" width="12" height="10"><path d="M.5 .5H11.5L7 9.5Z" fill="#f0f0f0" stroke="#111" stroke-width=".8"/></svg>
<div class="a sep" style="left:1671px;top:628px;width:244px;height:1px;"></div>
<svg style="left:1678px;top:635.0px" width="10" height="10"><path d="M0.5 1 L9.5 1 L5 9.5Z" fill="#1e1e1e"/></svg>
<div class="a ph" style="left:1691px;top:631.0px;height:20px;line-height:20px;">UV Maps</div>
<svg style="left:1898px;top:640.0px" width="12" height="6"><rect x="0" y="0" width="1" height="1" fill="#c8c8c8" fill-opacity=".55"/><rect x="1" y="1" width="1" height="1" fill="#000" fill-opacity=".35"/><rect x="0" y="3" width="1" height="1" fill="#c8c8c8" fill-opacity=".55"/><rect x="1" y="4" width="1" height="1" fill="#000" fill-opacity=".35"/><rect x="3" y="0" width="1" height="1" fill="#c8c8c8" fill-opacity=".55"/><rect x="4" y="1" width="1" height="1" fill="#000" fill-opacity=".35"/><rect x="3" y="3" width="1" height="1" fill="#c8c8c8" fill-opacity=".55"/><rect x="4" y="4" width="1" height="1" fill="#000" fill-opacity=".35"/><rect x="6" y="0" width="1" height="1" fill="#c8c8c8" fill-opacity=".55"/><rect x="7" y="1" width="1" height="1" fill="#000" fill-opacity=".35"/><rect x="6" y="3" width="1" height="1" fill="#c8c8c8" fill-opacity=".55"/><rect x="7" y="4" width="1" height="1" fill="#000" fill-opacity=".35"/><rect x="9" y="0" width="1" height="1" fill="#c8c8c8" fill-opacity=".55"/><rect x="10" y="1" width="1" height="1" fill="#000" fill-opacity=".35"/><rect x="9" y="3" width="1" height="1" fill="#c8c8c8" fill-opacity=".55"/><rect x="10" y="4" width="1" height="1" fill="#000" fill-opacity=".35"/></svg>
<div class="a " style="left:1674px;top:662px;width:210px;height:39px;background:#828282;border:1px solid #3a3a3a;border-radius:4px;box-shadow:0 1px 0 rgba(255,255,255,.1)"></div>
<svg style="left:1683px;top:684.5px" width="11" height="11"><circle cx="5.5" cy="5.5" r="4" fill="#c2c2c2" stroke="#4c4c4c" stroke-width="1"/><path d="M3.2 5.5H7.8M5.5 3.2V7.8" stroke="#3c3c3c" stroke-width="1.1"/></svg>
<svg style="left:1780px;top:688px" width="15" height="6"><path d="M0 1H15M0 4H15" stroke="#1a1a1a" stroke-width="1"/><path d="M0 2H15M0 5H15" stroke="#fff" stroke-opacity=".6" stroke-width="1"/></svg>
<div class="a tool lbl r0 tl tr" style="left:1892px;top:662px;width:20px;height:20px;line-height:20px;"></div>
<svg style="left:1894px;top:664px" width="16" height="16" viewBox="0 0 16 16"><path d="M8 2.5V13.5M2.5 8H13.5" stroke="#1a1a1a" stroke-width="3.6"/><path d="M8 3.2V12.8M3.2 8H12.8" stroke="#f4f4f4" stroke-width="1.8"/></svg>
<div class="a tool lbl r0 bl br" style="left:1892px;top:681px;width:20px;height:20px;line-height:20px;"></div>
<svg style="left:1894px;top:683px" width="16" height="16" viewBox="0 0 16 16"><g opacity="1"><path d="M2.5 8H13.5" stroke="#1a1a1a" stroke-width="3.6"/><path d="M3.2 8H12.8" stroke="#f4f4f4" stroke-width="1.8"/></g></svg>
<div class="a sep" style="left:1671px;top:708px;width:244px;height:1px;"></div>
<svg style="left:1678px;top:715.0px" width="10" height="10"><path d="M0.5 1 L9.5 1 L5 9.5Z" fill="#1e1e1e"/></svg>
<div class="a ph" style="left:1691px;top:711.0px;height:20px;line-height:20px;">Vertex Colors</div>
<svg style="left:1898px;top:720.0px" width="12" height="6"><rect x="0" y="0" width="1" height="1" fill="#c8c8c8" fill-opacity=".55"/><rect x="1" y="1" width="1" height="1" fill="#000" fill-opacity=".35"/><rect x="0" y="3" width="1" height="1" fill="#c8c8c8" fill-opacity=".55"/><rect x="1" y="4" width="1" height="1" fill="#000" fill-opacity=".35"/><rect x="3" y="0" width="1" height="1" fill="#c8c8c8" fill-opacity=".55"/><rect x="4" y="1" width="1" height="1" fill="#000" fill-opacity=".35"/><rect x="3" y="3" width="1" height="1" fill="#c8c8c8" fill-opacity=".55"/><rect x="4" y="4" width="1" height="1" fill="#000" fill-opacity=".35"/><rect x="6" y="0" width="1" height="1" fill="#c8c8c8" fill-opacity=".55"/><rect x="7" y="1" width="1" height="1" fill="#000" fill-opacity=".35"/><rect x="6" y="3" width="1" height="1" fill="#c8c8c8" fill-opacity=".55"/><rect x="7" y="4" width="1" height="1" fill="#000" fill-opacity=".35"/><rect x="9" y="0" width="1" height="1" fill="#c8c8c8" fill-opacity=".55"/><rect x="10" y="1" width="1" height="1" fill="#000" fill-opacity=".35"/><rect x="9" y="3" width="1" height="1" fill="#c8c8c8" fill-opacity=".55"/><rect x="10" y="4" width="1" height="1" fill="#000" fill-opacity=".35"/></svg>
<div class="a " style="left:1674px;top:742px;width:210px;height:39px;background:#828282;border:1px solid #3a3a3a;border-radius:4px;box-shadow:0 1px 0 rgba(255,255,255,.1)"></div>
<svg style="left:1683px;top:764.5px" width="11" height="11"><circle cx="5.5" cy="5.5" r="4" fill="#c2c2c2" stroke="#4c4c4c" stroke-width="1"/><path d="M3.2 5.5H7.8M5.5 3.2V7.8" stroke="#3c3c3c" stroke-width="1.1"/></svg>
<svg style="left:1780px;top:768px" width="15" height="6"><path d="M0 1H15M0 4H15" stroke="#1a1a1a" stroke-width="1"/><path d="M0 2H15M0 5H15" stroke="#fff" stroke-opacity=".6" stroke-width="1"/></svg>
<div class="a tool lbl r0 tl tr" style="left:1892px;top:742px;width:20px;height:20px;line-height:20px;"></div>
<svg style="left:1894px;top:744px" width="16" height="16" viewBox="0 0 16 16"><path d="M8 2.5V13.5M2.5 8H13.5" stroke="#1a1a1a" stroke-width="3.6"/><path d="M8 3.2V12.8M3.2 8H12.8" stroke="#f4f4f4" stroke-width="1.8"/></svg>
<div class="a tool lbl r0 bl br" style="left:1892px;top:761px;width:20px;height:20px;line-height:20px;"></div>
<svg style="left:1894px;top:763px" width="16" height="16" viewBox="0 0 16 16"><g opacity="1"><path d="M2.5 8H13.5" stroke="#1a1a1a" stroke-width="3.6"/><path d="M3.2 8H12.8" stroke="#f4f4f4" stroke-width="1.8"/></g></svg>
<div class="a sep" style="left:1671px;top:788px;width:244px;height:1px;"></div>
<svg style="left:1678px;top:794.5px" width="10" height="10"><path d="M1 0.5 L1 9.5 L9.5 5Z" fill="#1e1e1e"/></svg>
<div class="a ph" style="left:1691px;top:790.5px;height:20px;line-height:20px;">Geometry Data</div>
<svg style="left:1898px;top:799.5px" width="12" height="6"><rect x="0" y="0" width="1" height="1" fill="#c8c8c8" fill-opacity=".55"/><rect x="1" y="1" width="1" height="1" fill="#000" fill-opacity=".35"/><rect x="0" y="3" width="1" height="1" fill="#c8c8c8" fill-opacity=".55"/><rect x="1" y="4" width="1" height="1" fill="#000" fill-opacity=".35"/><rect x="3" y="0" width="1" height="1" fill="#c8c8c8" fill-opacity=".55"/><rect x="4" y="1" width="1" height="1" fill="#000" fill-opacity=".35"/><rect x="3" y="3" width="1" height="1" fill="#c8c8c8" fill-opacity=".55"/><rect x="4" y="4" width="1" height="1" fill="#000" fill-opacity=".35"/><rect x="6" y="0" width="1" height="1" fill="#c8c8c8" fill-opacity=".55"/><rect x="7" y="1" width="1" height="1" fill="#000" fill-opacity=".35"/><rect x="6" y="3" width="1" height="1" fill="#c8c8c8" fill-opacity=".55"/><rect x="7" y="4" width="1" height="1" fill="#000" fill-opacity=".35"/><rect x="9" y="0" width="1" height="1" fill="#c8c8c8" fill-opacity=".55"/><rect x="10" y="1" width="1" height="1" fill="#000" fill-opacity=".35"/><rect x="9" y="3" width="1" height="1" fill="#c8c8c8" fill-opacity=".55"/><rect x="10" y="4" width="1" height="1" fill="#000" fill-opacity=".35"/></svg>
<div class="a sep" style="left:1671px;top:812px;width:244px;height:1px;"></div>
<svg style="left:1678px;top:819.0px" width="10" height="10"><path d="M1 0.5 L1 9.5 L9.5 5Z" fill="#1e1e1e"/></svg>
<div class="a ph" style="left:1691px;top:815.0px;height:20px;line-height:20px;">Custom Properties</div>
<svg style="left:1898px;top:824.0px" width="12" height="6"><rect x="0" y="0" width="1" height="1" fill="#c8c8c8" fill-opacity=".55"/><rect x="1" y="1" width="1" height="1" fill="#000" fill-opacity=".35"/><rect x="0" y="3" width="1" height="1" fill="#c8c8c8" fill-opacity=".55"/><rect x="1" y="4" width="1" height="1" fill="#000" fill-opacity=".35"/><rect x="3" y="0" width="1" height="1" fill="#c8c8c8" fill-opacity=".55"/><rect x="4" y="1" width="1" height="1" fill="#000" fill-opacity=".35"/><rect x="3" y="3" width="1" height="1" fill="#c8c8c8" fill-opacity=".55"/><rect x="4" y="4" width="1" height="1" fill="#000" fill-opacity=".35"/><rect x="6" y="0" width="1" height="1" fill="#c8c8c8" fill-opacity=".55"/><rect x="7" y="1" width="1" height="1" fill="#000" fill-opacity=".35"/><rect x="6" y="3" width="1" height="1" fill="#c8c8c8" fill-opacity=".55"/><rect x="7" y="4" width="1" height="1" fill="#000" fill-opacity=".35"/><rect x="9" y="0" width="1" height="1" fill="#c8c8c8" fill-opacity=".55"/><rect x="10" y="1" width="1" height="1" fill="#000" fill-opacity=".35"/><rect x="9" y="3" width="1" height="1" fill="#c8c8c8" fill-opacity=".55"/><rect x="10" y="4" width="1" height="1" fill="#000" fill-opacity=".35"/></svg>
<svg style="left:1666px;top:1038px" width="12" height="12" viewBox="0 0 12 12"><path d="M0 1 L11 12 M0 5 L7 12 M0 9 L3 12" stroke="#2e2e2e" stroke-width="1.2" fill="none"/><path d="M0 2.4 L9.6 12 M0 6.4 L5.6 12 M0 10.4 L1.6 12" stroke="#9a9a9a" stroke-width="0.9" fill="none"/></svg>
</body></html>
